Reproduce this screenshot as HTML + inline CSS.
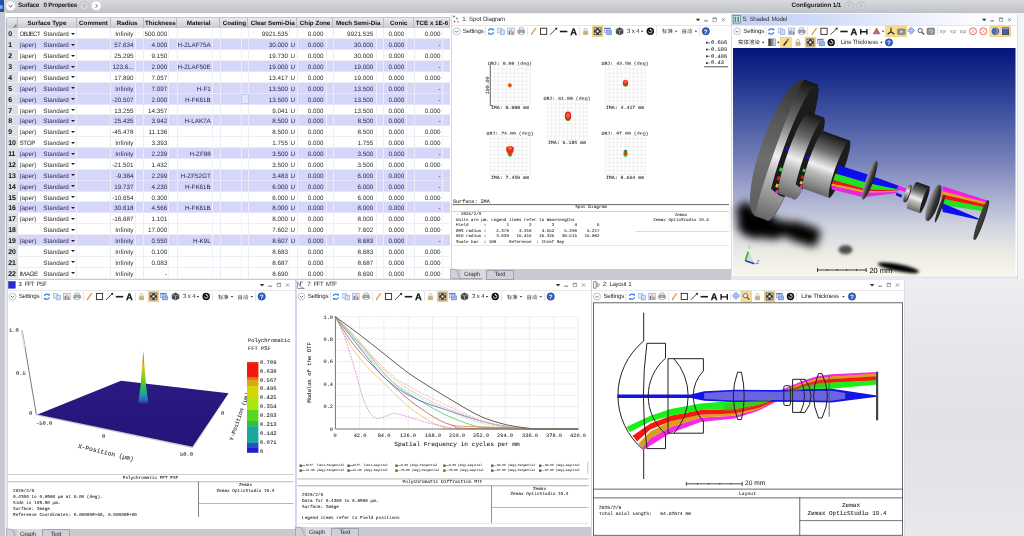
<!DOCTYPE html>
<html lang="en"><head><meta charset="utf-8"><title>Zemax OpticStudio</title>
<style>
*{box-sizing:border-box;margin:0;padding:0}
html,body{width:1024px;height:536px;overflow:hidden}
body{text-rendering:geometricPrecision;background:#e6e8eb;font-family:"Liberation Sans","Noto Sans CJK SC",sans-serif;font-size:6.3px;color:#2c2c2c;position:relative}
#app{position:absolute;left:0;top:0;width:1024px;height:536px;overflow:hidden;filter:blur(.4px);will-change:transform;isolation:isolate}
.a{position:absolute}
.t{position:absolute;white-space:nowrap;line-height:1}
.m{position:absolute;white-space:pre;line-height:1;font-family:"Liberation Mono","DejaVu Sans Mono",monospace;color:#262626;-webkit-text-stroke:.2px #262626}
.win{position:absolute;background:#fff;overflow:hidden}
.ttl{position:absolute;left:0;top:0;right:0;height:10.5px;background:#fff}
.tbar{position:absolute;left:0;right:0;height:12px;background:#fdfdfd}
.sep{position:absolute;width:1px;height:9px;background:#d9dbe0}
.hl{position:absolute;background:#fbe3a0;border:0.5px solid #e8c35c;height:10.5px}
.tabs{position:absolute;left:0;right:0;background:#c9cbd1}
.tab{position:absolute;font-size:7px;text-align:center;line-height:9px;color:#333}
svg{position:absolute;overflow:visible}
.hd{position:absolute;top:17.5px;height:11px;font-weight:bold;font-size:6.25px;text-align:center;line-height:12px;color:#111;white-space:nowrap;background:linear-gradient(#e9eaee,#c6c9cf);border-right:1px solid #b9bcc3;overflow:hidden;padding-left:1px}
.row{position:absolute;left:17.5px;width:432.5px;height:10.875px;background:#fff;border-bottom:1px solid #eeeef2}
.row.g{background:#d6d6fb;border-bottom:1px solid #e4e4fb;color:#2a2a50}
.c{position:absolute;top:0;height:10.875px;overflow:hidden;line-height:14.9px;font-size:6.3px;white-space:nowrap}
.r{text-align:right}
.v{position:absolute;top:28.4px;width:1px;height:250px;background:rgba(225,226,234,.9)}
.rn{position:absolute;left:6.5px;width:11px;height:10.875px;overflow:hidden;font-weight:bold;font-size:6.9px;line-height:14.7px;text-align:left;padding-left:1.8px;letter-spacing:-.2px;color:#111;background:#dddfe4;border-bottom:1px solid #eceef1}
</style></head>
<body>
<div id="app">
<div class="a" style="left:0;top:0;width:1024px;height:12.5px;background:linear-gradient(#d8dade 0%,#cdcfd4 45%,#bfc1c7 100%)"></div>
<div class="a" style="left:0;top:12.5px;width:1024px;height:1.5px;background:#f4f5f7"></div>
<div class="a" style="left:0;top:0;width:4px;height:12.3px;background:#2450a8"></div><div class="a" style="left:-1.5px;top:4.5px;width:4px;height:4px;border-radius:2px;background:#7fa6e8"></div>
<div class="a" style="left:0;top:12px;width:4.8px;height:524px;background:#c7cad3"></div><div class="a" style="left:4.8px;top:12px;width:1.7px;height:524px;background:#f2f3f6"></div>
<div class="a" style="left:5.5px;top:13px;width:445px;height:266.5px;background:#fff"></div>
<div class="a" style="left:6px;top:17px;width:444px;height:262px;border-left:.7px solid #b4b7c0;border-top:.7px solid #c4c7cf;border-top-left-radius:2px"></div>
<svg class="a" style="left:0;top:0" width="110" height="12" viewBox="0 0 110 12"><circle cx="10.6" cy="5.9" r="4.7" fill="#fff" stroke="#d8d8dc" stroke-width=".5"/><path d="M8.7 5.2 L10.6 7 L12.5 5.2" fill="none" stroke="#444" stroke-width="1"/><circle cx="84.4" cy="5.9" r="4.7" fill="#d2d4d9" stroke="#b8bac0" stroke-width=".6"/><path d="M85.2 4 L83.4 5.9 L85.2 7.8" fill="none" stroke="#aaa" stroke-width=".9"/><circle cx="96.3" cy="5.9" r="4.7" fill="#fff" stroke="#d8d8dc" stroke-width=".5"/><path d="M95.6 4 L97.4 5.9 L95.6 7.8" fill="none" stroke="#555" stroke-width=".9"/></svg>
<div class="t" style="left:18px;top:2.6px;font-weight:bold;font-size:6.3px;letter-spacing:-.3px;color:#222">Surface</div>
<div class="t" style="left:43.6px;top:2.6px;font-weight:bold;font-size:6.3px;letter-spacing:-.25px;color:#222">0 Properties</div>
<div class="t" style="left:791.5px;top:2.5px;font-weight:bold;font-size:6.3px;letter-spacing:-.12px;color:#222">Configuration 1/1</div>
<svg class="a" style="left:840px;top:0" width="30" height="12" viewBox="840 0 30 12"><circle cx="849" cy="5.7" r="4.3" fill="#d0d2d7" stroke="#b4b6bc" stroke-width=".6"/><path d="M849.8 3.9 L848 5.7 L849.8 7.5" fill="none" stroke="#aaa" stroke-width=".9"/><circle cx="861" cy="5.7" r="4.3" fill="#d0d2d7" stroke="#b4b6bc" stroke-width=".6"/><path d="M860.2 3.9 L862 5.7 L860.2 7.5" fill="none" stroke="#aaa" stroke-width=".9"/></svg>
<div class="a" style="left:6.5px;top:17.5px;width:443.5px;height:11px;background:linear-gradient(#e9eaee,#c6c9cf)"></div>
<div class="hd" style="left:6.5px;width:11.0px"></div>
<div class="hd" style="left:17.5px;width:59.0px">Surface Type</div>
<div class="hd" style="left:76.5px;width:34.0px">Comment</div>
<div class="hd" style="left:110.5px;width:33.2px">Radius</div>
<div class="hd" style="left:143.7px;width:33.3px">Thickness</div>
<div class="hd" style="left:177.0px;width:43.3px">Material</div>
<div class="hd" style="left:220.3px;width:28.1px">Coating</div>
<div class="hd" style="left:248.4px;width:48.8px">Clear Semi-Dia</div>
<div class="hd" style="left:297.2px;width:35.8px">Chip Zone</div>
<div class="hd" style="left:333.0px;width:50.5px">Mech Semi-Dia</div>
<div class="hd" style="left:383.5px;width:30.5px">Conic</div>
<div class="hd" style="left:414.0px;width:36.0px">TCE x 1E-6</div>
<svg class="a" style="left:12px;top:23px" width="5" height="5" viewBox="0 0 5 5"><path d="M4.5 0.5 L4.5 4.5 L0.5 4.5 Z" fill="#8a8d94"/></svg>
<div class="rn" style="top:28.400px">0</div>
<div class="row" style="top:28.400px"><span class="c" style="left:2px;letter-spacing:-.72px">OBJECT</span><span class="c" style="left:25.8px">Standard</span><i style="position:absolute;left:53.1px;top:4.5px;width:0;height:0;border-left:2.1px solid transparent;border-right:2.1px solid transparent;border-top:2.6px solid #1a1a1a"></i><span class="c r" style="left:76.0px;width:40px">Infinity</span><span class="c r" style="left:109.8px;width:40px">500.000</span><span class="c r" style="left:230.5px;width:40px">9921.535</span><span class="c r" style="left:266.0px;width:40px">0.000</span><span class="c r" style="left:315.7px;width:40px">9921.535</span><span class="c r" style="left:346.7px;width:40px">0.000</span><span class="c r" style="left:383.0px;width:40px">0.000</span></div>
<div class="rn" style="top:39.275px">1</div>
<div class="row g" style="top:39.275px"><span class="c" style="left:2.0px">(aper)</span><span class="c" style="left:25.8px">Standard</span><i style="position:absolute;left:53.1px;top:4.5px;width:0;height:0;border-left:2.1px solid transparent;border-right:2.1px solid transparent;border-top:2.6px solid #1a1a1a"></i><span class="c r" style="left:76.0px;width:40px">57.634</span><span class="c r" style="left:109.8px;width:40px">4.000</span><span class="c r" style="left:153.3px;width:40px">H-ZLAF75A</span><span class="c r" style="left:230.5px;width:40px">30.000</span><span class="c" style="left:273.1px">U</span><span class="c r" style="left:266.0px;width:40px">0.000</span><span class="c r" style="left:315.7px;width:40px">30.000</span><span class="c r" style="left:346.7px;width:40px">0.000</span><span class="c r" style="left:383.0px;width:40px">-</span></div>
<div class="rn" style="top:50.150px">2</div>
<div class="row" style="top:50.150px"><span class="c" style="left:2.0px">(aper)</span><span class="c" style="left:25.8px">Standard</span><i style="position:absolute;left:53.1px;top:4.5px;width:0;height:0;border-left:2.1px solid transparent;border-right:2.1px solid transparent;border-top:2.6px solid #1a1a1a"></i><span class="c r" style="left:76.0px;width:40px">25.295</span><span class="c r" style="left:109.8px;width:40px">9.150</span><span class="c r" style="left:230.5px;width:40px">19.730</span><span class="c" style="left:273.1px">U</span><span class="c r" style="left:266.0px;width:40px">0.000</span><span class="c r" style="left:315.7px;width:40px">30.000</span><span class="c r" style="left:346.7px;width:40px">0.000</span><span class="c r" style="left:383.0px;width:40px">0.000</span></div>
<div class="rn" style="top:61.025px">3</div>
<div class="row g" style="top:61.025px"><span class="c" style="left:2.0px">(aper)</span><span class="c" style="left:25.8px">Standard</span><i style="position:absolute;left:53.1px;top:4.5px;width:0;height:0;border-left:2.1px solid transparent;border-right:2.1px solid transparent;border-top:2.6px solid #1a1a1a"></i><span class="c r" style="left:76.0px;width:40px">123.6...</span><span class="c r" style="left:109.8px;width:40px">2.000</span><span class="c r" style="left:153.3px;width:40px">H-ZLAF50E</span><span class="c r" style="left:230.5px;width:40px">19.000</span><span class="c" style="left:273.1px">U</span><span class="c r" style="left:266.0px;width:40px">0.000</span><span class="c r" style="left:315.7px;width:40px">19.000</span><span class="c r" style="left:346.7px;width:40px">0.000</span><span class="c r" style="left:383.0px;width:40px">-</span></div>
<div class="rn" style="top:71.900px">4</div>
<div class="row" style="top:71.900px"><span class="c" style="left:2.0px">(aper)</span><span class="c" style="left:25.8px">Standard</span><i style="position:absolute;left:53.1px;top:4.5px;width:0;height:0;border-left:2.1px solid transparent;border-right:2.1px solid transparent;border-top:2.6px solid #1a1a1a"></i><span class="c r" style="left:76.0px;width:40px">17.890</span><span class="c r" style="left:109.8px;width:40px">7.057</span><span class="c r" style="left:230.5px;width:40px">13.417</span><span class="c" style="left:273.1px">U</span><span class="c r" style="left:266.0px;width:40px">0.000</span><span class="c r" style="left:315.7px;width:40px">19.000</span><span class="c r" style="left:346.7px;width:40px">0.000</span><span class="c r" style="left:383.0px;width:40px">0.000</span></div>
<div class="rn" style="top:82.775px">5</div>
<div class="row g" style="top:82.775px"><span class="c" style="left:2.0px">(aper)</span><span class="c" style="left:25.8px">Standard</span><i style="position:absolute;left:53.1px;top:4.5px;width:0;height:0;border-left:2.1px solid transparent;border-right:2.1px solid transparent;border-top:2.6px solid #1a1a1a"></i><span class="c r" style="left:76.0px;width:40px">Infinity</span><span class="c r" style="left:109.8px;width:40px">7.097</span><span class="c r" style="left:153.3px;width:40px">H-F1</span><span class="c r" style="left:230.5px;width:40px">13.500</span><span class="c" style="left:273.1px">U</span><span class="c r" style="left:266.0px;width:40px">0.000</span><span class="c r" style="left:315.7px;width:40px">13.500</span><span class="c r" style="left:346.7px;width:40px">0.000</span><span class="c r" style="left:383.0px;width:40px">-</span></div>
<div class="rn" style="top:93.650px">6</div>
<div class="row g" style="top:93.650px"><span class="c" style="left:2.0px">(aper)</span><span class="c" style="left:25.8px">Standard</span><i style="position:absolute;left:53.1px;top:4.5px;width:0;height:0;border-left:2.1px solid transparent;border-right:2.1px solid transparent;border-top:2.6px solid #1a1a1a"></i><span class="c r" style="left:76.0px;width:40px">-20.507</span><span class="c r" style="left:109.8px;width:40px">2.000</span><span class="c r" style="left:153.3px;width:40px">H-FK61B</span><span class="c r" style="left:230.5px;width:40px">13.500</span><span class="c" style="left:273.1px">U</span><span class="c r" style="left:266.0px;width:40px">0.000</span><span class="c r" style="left:315.7px;width:40px">13.500</span><span class="c r" style="left:346.7px;width:40px">0.000</span><span class="c r" style="left:383.0px;width:40px">-</span></div>
<div class="rn" style="top:104.525px">7</div>
<div class="row" style="top:104.525px"><span class="c" style="left:2.0px">(aper)</span><span class="c" style="left:25.8px">Standard</span><i style="position:absolute;left:53.1px;top:4.5px;width:0;height:0;border-left:2.1px solid transparent;border-right:2.1px solid transparent;border-top:2.6px solid #1a1a1a"></i><span class="c r" style="left:76.0px;width:40px">13.255</span><span class="c r" style="left:109.8px;width:40px">14.357</span><span class="c r" style="left:230.5px;width:40px">9.041</span><span class="c" style="left:273.1px">U</span><span class="c r" style="left:266.0px;width:40px">0.000</span><span class="c r" style="left:315.7px;width:40px">13.500</span><span class="c r" style="left:346.7px;width:40px">0.000</span><span class="c r" style="left:383.0px;width:40px">0.000</span></div>
<div class="rn" style="top:115.400px">8</div>
<div class="row g" style="top:115.400px"><span class="c" style="left:2.0px">(aper)</span><span class="c" style="left:25.8px">Standard</span><i style="position:absolute;left:53.1px;top:4.5px;width:0;height:0;border-left:2.1px solid transparent;border-right:2.1px solid transparent;border-top:2.6px solid #1a1a1a"></i><span class="c r" style="left:76.0px;width:40px">25.435</span><span class="c r" style="left:109.8px;width:40px">3.942</span><span class="c r" style="left:153.3px;width:40px">H-LAK7A</span><span class="c r" style="left:230.5px;width:40px">8.500</span><span class="c" style="left:273.1px">U</span><span class="c r" style="left:266.0px;width:40px">0.000</span><span class="c r" style="left:315.7px;width:40px">8.500</span><span class="c r" style="left:346.7px;width:40px">0.000</span><span class="c r" style="left:383.0px;width:40px">-</span></div>
<div class="rn" style="top:126.275px">9</div>
<div class="row" style="top:126.275px"><span class="c" style="left:2.0px">(aper)</span><span class="c" style="left:25.8px">Standard</span><i style="position:absolute;left:53.1px;top:4.5px;width:0;height:0;border-left:2.1px solid transparent;border-right:2.1px solid transparent;border-top:2.6px solid #1a1a1a"></i><span class="c r" style="left:76.0px;width:40px">-45.478</span><span class="c r" style="left:109.8px;width:40px">11.136</span><span class="c r" style="left:230.5px;width:40px">8.500</span><span class="c" style="left:273.1px">U</span><span class="c r" style="left:266.0px;width:40px">0.000</span><span class="c r" style="left:315.7px;width:40px">8.500</span><span class="c r" style="left:346.7px;width:40px">0.000</span><span class="c r" style="left:383.0px;width:40px">0.000</span></div>
<div class="rn" style="top:137.150px">10</div>
<div class="row" style="top:137.150px"><span class="c" style="left:2px;letter-spacing:-.4px">STOP</span><span class="c" style="left:25.8px">Standard</span><i style="position:absolute;left:53.1px;top:4.5px;width:0;height:0;border-left:2.1px solid transparent;border-right:2.1px solid transparent;border-top:2.6px solid #1a1a1a"></i><span class="c r" style="left:76.0px;width:40px">Infinity</span><span class="c r" style="left:109.8px;width:40px">3.393</span><span class="c r" style="left:230.5px;width:40px">1.755</span><span class="c" style="left:273.1px">U</span><span class="c r" style="left:266.0px;width:40px">0.000</span><span class="c r" style="left:315.7px;width:40px">1.755</span><span class="c r" style="left:346.7px;width:40px">0.000</span><span class="c r" style="left:383.0px;width:40px">0.000</span></div>
<div class="rn" style="top:148.025px">11</div>
<div class="row g" style="top:148.025px"><span class="c" style="left:2.0px">(aper)</span><span class="c" style="left:25.8px">Standard</span><i style="position:absolute;left:53.1px;top:4.5px;width:0;height:0;border-left:2.1px solid transparent;border-right:2.1px solid transparent;border-top:2.6px solid #1a1a1a"></i><span class="c r" style="left:76.0px;width:40px">Infinity</span><span class="c r" style="left:109.8px;width:40px">2.239</span><span class="c r" style="left:153.3px;width:40px">H-ZF88</span><span class="c r" style="left:230.5px;width:40px">3.500</span><span class="c" style="left:273.1px">U</span><span class="c r" style="left:266.0px;width:40px">0.000</span><span class="c r" style="left:315.7px;width:40px">3.500</span><span class="c r" style="left:346.7px;width:40px">0.000</span><span class="c r" style="left:383.0px;width:40px">-</span></div>
<div class="rn" style="top:158.900px">12</div>
<div class="row" style="top:158.900px"><span class="c" style="left:2.0px">(aper)</span><span class="c" style="left:25.8px">Standard</span><i style="position:absolute;left:53.1px;top:4.5px;width:0;height:0;border-left:2.1px solid transparent;border-right:2.1px solid transparent;border-top:2.6px solid #1a1a1a"></i><span class="c r" style="left:76.0px;width:40px">-21.501</span><span class="c r" style="left:109.8px;width:40px">1.432</span><span class="c r" style="left:230.5px;width:40px">3.500</span><span class="c" style="left:273.1px">U</span><span class="c r" style="left:266.0px;width:40px">0.000</span><span class="c r" style="left:315.7px;width:40px">3.500</span><span class="c r" style="left:346.7px;width:40px">0.000</span><span class="c r" style="left:383.0px;width:40px">0.000</span></div>
<div class="rn" style="top:169.775px">13</div>
<div class="row g" style="top:169.775px"><span class="c" style="left:2.0px">(aper)</span><span class="c" style="left:25.8px">Standard</span><i style="position:absolute;left:53.1px;top:4.5px;width:0;height:0;border-left:2.1px solid transparent;border-right:2.1px solid transparent;border-top:2.6px solid #1a1a1a"></i><span class="c r" style="left:76.0px;width:40px">-9.384</span><span class="c r" style="left:109.8px;width:40px">2.299</span><span class="c r" style="left:153.3px;width:40px">H-ZF52GT</span><span class="c r" style="left:230.5px;width:40px">3.483</span><span class="c" style="left:273.1px">U</span><span class="c r" style="left:266.0px;width:40px">0.000</span><span class="c r" style="left:315.7px;width:40px">6.000</span><span class="c r" style="left:346.7px;width:40px">0.000</span><span class="c r" style="left:383.0px;width:40px">-</span></div>
<div class="rn" style="top:180.650px">14</div>
<div class="row g" style="top:180.650px"><span class="c" style="left:2.0px">(aper)</span><span class="c" style="left:25.8px">Standard</span><i style="position:absolute;left:53.1px;top:4.5px;width:0;height:0;border-left:2.1px solid transparent;border-right:2.1px solid transparent;border-top:2.6px solid #1a1a1a"></i><span class="c r" style="left:76.0px;width:40px">19.737</span><span class="c r" style="left:109.8px;width:40px">4.230</span><span class="c r" style="left:153.3px;width:40px">H-FK61B</span><span class="c r" style="left:230.5px;width:40px">6.000</span><span class="c" style="left:273.1px">U</span><span class="c r" style="left:266.0px;width:40px">0.000</span><span class="c r" style="left:315.7px;width:40px">6.000</span><span class="c r" style="left:346.7px;width:40px">0.000</span><span class="c r" style="left:383.0px;width:40px">-</span></div>
<div class="rn" style="top:191.525px">15</div>
<div class="row" style="top:191.525px"><span class="c" style="left:2.0px">(aper)</span><span class="c" style="left:25.8px">Standard</span><i style="position:absolute;left:53.1px;top:4.5px;width:0;height:0;border-left:2.1px solid transparent;border-right:2.1px solid transparent;border-top:2.6px solid #1a1a1a"></i><span class="c r" style="left:76.0px;width:40px">-10.654</span><span class="c r" style="left:109.8px;width:40px">0.300</span><span class="c r" style="left:230.5px;width:40px">6.000</span><span class="c" style="left:273.1px">U</span><span class="c r" style="left:266.0px;width:40px">0.000</span><span class="c r" style="left:315.7px;width:40px">6.000</span><span class="c r" style="left:346.7px;width:40px">0.000</span><span class="c r" style="left:383.0px;width:40px">0.000</span></div>
<div class="rn" style="top:202.400px">16</div>
<div class="row g" style="top:202.400px"><span class="c" style="left:2.0px">(aper)</span><span class="c" style="left:25.8px">Standard</span><i style="position:absolute;left:53.1px;top:4.5px;width:0;height:0;border-left:2.1px solid transparent;border-right:2.1px solid transparent;border-top:2.6px solid #1a1a1a"></i><span class="c r" style="left:76.0px;width:40px">30.618</span><span class="c r" style="left:109.8px;width:40px">4.566</span><span class="c r" style="left:153.3px;width:40px">H-FK61B</span><span class="c r" style="left:230.5px;width:40px">8.000</span><span class="c" style="left:273.1px">U</span><span class="c r" style="left:266.0px;width:40px">0.000</span><span class="c r" style="left:315.7px;width:40px">8.000</span><span class="c r" style="left:346.7px;width:40px">0.000</span><span class="c r" style="left:383.0px;width:40px">-</span></div>
<div class="rn" style="top:213.275px">17</div>
<div class="row" style="top:213.275px"><span class="c" style="left:2.0px">(aper)</span><span class="c" style="left:25.8px">Standard</span><i style="position:absolute;left:53.1px;top:4.5px;width:0;height:0;border-left:2.1px solid transparent;border-right:2.1px solid transparent;border-top:2.6px solid #1a1a1a"></i><span class="c r" style="left:76.0px;width:40px">-16.687</span><span class="c r" style="left:109.8px;width:40px">1.101</span><span class="c r" style="left:230.5px;width:40px">8.000</span><span class="c" style="left:273.1px">U</span><span class="c r" style="left:266.0px;width:40px">0.000</span><span class="c r" style="left:315.7px;width:40px">8.000</span><span class="c r" style="left:346.7px;width:40px">0.000</span><span class="c r" style="left:383.0px;width:40px">0.000</span></div>
<div class="rn" style="top:224.150px">18</div>
<div class="row" style="top:224.150px"><span class="c" style="left:25.8px">Standard</span><i style="position:absolute;left:53.1px;top:4.5px;width:0;height:0;border-left:2.1px solid transparent;border-right:2.1px solid transparent;border-top:2.6px solid #1a1a1a"></i><span class="c r" style="left:76.0px;width:40px">Infinity</span><span class="c r" style="left:109.8px;width:40px">17.000</span><span class="c r" style="left:230.5px;width:40px">7.602</span><span class="c" style="left:273.1px">U</span><span class="c r" style="left:266.0px;width:40px">0.000</span><span class="c r" style="left:315.7px;width:40px">7.602</span><span class="c r" style="left:346.7px;width:40px">0.000</span><span class="c r" style="left:383.0px;width:40px">0.000</span></div>
<div class="rn" style="top:235.025px">19</div>
<div class="row g" style="top:235.025px"><span class="c" style="left:2.0px">(aper)</span><span class="c" style="left:25.8px">Standard</span><i style="position:absolute;left:53.1px;top:4.5px;width:0;height:0;border-left:2.1px solid transparent;border-right:2.1px solid transparent;border-top:2.6px solid #1a1a1a"></i><span class="c r" style="left:76.0px;width:40px">Infinity</span><span class="c r" style="left:109.8px;width:40px">0.550</span><span class="c r" style="left:153.3px;width:40px">H-K9L</span><span class="c r" style="left:230.5px;width:40px">8.607</span><span class="c" style="left:273.1px">U</span><span class="c r" style="left:266.0px;width:40px">0.000</span><span class="c r" style="left:315.7px;width:40px">8.683</span><span class="c r" style="left:346.7px;width:40px">0.000</span><span class="c r" style="left:383.0px;width:40px">-</span></div>
<div class="rn" style="top:245.900px">20</div>
<div class="row" style="top:245.900px"><span class="c" style="left:25.8px">Standard</span><i style="position:absolute;left:53.1px;top:4.5px;width:0;height:0;border-left:2.1px solid transparent;border-right:2.1px solid transparent;border-top:2.6px solid #1a1a1a"></i><span class="c r" style="left:76.0px;width:40px">Infinity</span><span class="c r" style="left:109.8px;width:40px">0.100</span><span class="c r" style="left:230.5px;width:40px">8.683</span><span class="c r" style="left:266.0px;width:40px">0.000</span><span class="c r" style="left:315.7px;width:40px">8.683</span><span class="c r" style="left:346.7px;width:40px">0.000</span><span class="c r" style="left:383.0px;width:40px">0.000</span></div>
<div class="rn" style="top:256.775px">21</div>
<div class="row" style="top:256.775px"><span class="c" style="left:25.8px">Standard</span><i style="position:absolute;left:53.1px;top:4.5px;width:0;height:0;border-left:2.1px solid transparent;border-right:2.1px solid transparent;border-top:2.6px solid #1a1a1a"></i><span class="c r" style="left:76.0px;width:40px">Infinity</span><span class="c r" style="left:109.8px;width:40px">0.083</span><span class="c r" style="left:230.5px;width:40px">8.687</span><span class="c r" style="left:266.0px;width:40px">0.000</span><span class="c r" style="left:315.7px;width:40px">8.687</span><span class="c r" style="left:346.7px;width:40px">0.000</span><span class="c r" style="left:383.0px;width:40px">0.000</span></div>
<div class="rn" style="top:267.650px">22</div>
<div class="row" style="top:267.650px"><span class="c" style="left:2px;letter-spacing:-.4px">IMAGE</span><span class="c" style="left:25.8px">Standard</span><i style="position:absolute;left:53.1px;top:4.5px;width:0;height:0;border-left:2.1px solid transparent;border-right:2.1px solid transparent;border-top:2.6px solid #1a1a1a"></i><span class="c r" style="left:76.0px;width:40px">Infinity</span><span class="c r" style="left:109.8px;width:40px">-</span><span class="c r" style="left:230.5px;width:40px">8.690</span><span class="c r" style="left:266.0px;width:40px">0.000</span><span class="c r" style="left:315.7px;width:40px">8.690</span><span class="c r" style="left:346.7px;width:40px">0.000</span><span class="c r" style="left:383.0px;width:40px">0.000</span></div>
<div class="v" style="left:76.0px;background:rgba(236,237,244,.95)"></div>
<div class="v" style="left:110.0px;background:rgba(236,237,244,.95)"></div>
<div class="v" style="left:143.2px;background:rgba(236,237,244,.95)"></div>
<div class="v" style="left:176.5px;background:rgba(236,237,244,.95)"></div>
<div class="v" style="left:219.8px;background:rgba(236,237,244,.95)"></div>
<div class="v" style="left:247.9px;background:rgba(236,237,244,.95)"></div>
<div class="v" style="left:296.7px;background:rgba(236,237,244,.95)"></div>
<div class="v" style="left:332.5px;background:rgba(236,237,244,.95)"></div>
<div class="v" style="left:383.0px;background:rgba(236,237,244,.95)"></div>
<div class="v" style="left:413.5px;background:rgba(236,237,244,.95)"></div>
<div class="v" style="left:134.5px;background:rgba(240,241,247,.9)"></div>
<div class="v" style="left:168.0px;background:rgba(240,241,247,.9)"></div>
<div class="v" style="left:211.7px;background:rgba(240,241,247,.9)"></div>
<div class="v" style="left:240.6px;background:rgba(240,241,247,.9)"></div>
<div class="v" style="left:289.2px;background:rgba(240,241,247,.9)"></div>
<div class="v" style="left:325.5px;background:rgba(240,241,247,.9)"></div>
<div class="v" style="left:375.5px;background:rgba(240,241,247,.9)"></div>
<div class="v" style="left:406.0px;background:rgba(240,241,247,.9)"></div>
<div class="v" style="left:442.0px;background:rgba(240,241,247,.9)"></div>
<div class="a" style="left:241px;top:93.7px;width:7.5px;height:10.5px;background:#dfe6f8;border:.5px solid #c4cdea"></div>
<div class="a" style="left:450.5px;top:14.0px;width:280.0px;height:265.5px;background:#fff;border-left:1px solid #d3d8ea"></div>
<div class="a" style="left:450.5px;top:24.5px;width:280.0px;height:.8px;background:#e4e6ec"></div>
<div class="t" style="left:462.2px;top:16.6px;font-size:6.2px;color:#333;letter-spacing:-0.19px;word-spacing:0.48px;">1: Spot Diagram</div>
<div class="t" style="left:462.8px;top:28.6px;font-size:6.2px;color:#2c2c2c;letter-spacing:-.2px;">Settings</div>
<div class="t" style="left:627.0px;top:28.6px;font-size:6.0px;color:#2c2c2c;letter-spacing:-.1px;">3 x 4</div>
<div class="t" style="left:662.0px;top:30.4px;font-size:5.4px;color:#2c2c2c;">标准</div>
<div class="t" style="left:681.6px;top:30.4px;font-size:5.4px;color:#2c2c2c;">自动</div>
<div class="m" style="left:711.30px;top:40.00px;font-size:16.20px;color:#262626;transform:scale(0.33333);transform-origin:0 0">0.656</div>
<div class="m" style="left:711.30px;top:46.80px;font-size:16.20px;color:#262626;transform:scale(0.33333);transform-origin:0 0">0.589</div>
<div class="m" style="left:711.30px;top:53.60px;font-size:16.20px;color:#262626;transform:scale(0.33333);transform-origin:0 0">0.486</div>
<div class="m" style="left:711.30px;top:60.40px;font-size:16.20px;color:#262626;transform:scale(0.33333);transform-origin:0 0">0.43</div>
<div class="m" style="left:480.30px;top:62.40px;width:180.0px;text-align:center;font-size:14.70px;transform:scale(0.33333);transform-origin:0 0">OBJ: 0.00 (deg)</div>
<div class="m" style="left:480.30px;top:106.20px;width:180.0px;text-align:center;font-size:14.70px;transform:scale(0.33333);transform-origin:0 0">IMA: 0.000 mm</div>
<div class="m" style="left:595.30px;top:62.40px;width:180.0px;text-align:center;font-size:14.70px;transform:scale(0.33333);transform-origin:0 0">OBJ: 43.50 (deg)</div>
<div class="m" style="left:595.30px;top:106.20px;width:180.0px;text-align:center;font-size:14.70px;transform:scale(0.33333);transform-origin:0 0">IMA: 4.417 mm</div>
<div class="m" style="left:537.30px;top:97.40px;width:180.0px;text-align:center;font-size:14.70px;transform:scale(0.33333);transform-origin:0 0">OBJ: 61.00 (deg)</div>
<div class="m" style="left:537.30px;top:141.20px;width:180.0px;text-align:center;font-size:14.70px;transform:scale(0.33333);transform-origin:0 0">IMA: 6.185 mm</div>
<div class="m" style="left:480.30px;top:131.90px;width:180.0px;text-align:center;font-size:14.70px;transform:scale(0.33333);transform-origin:0 0">OBJ: 74.00 (deg)</div>
<div class="m" style="left:480.30px;top:175.70px;width:180.0px;text-align:center;font-size:14.70px;transform:scale(0.33333);transform-origin:0 0">IMA: 7.459 mm</div>
<div class="m" style="left:595.30px;top:131.90px;width:180.0px;text-align:center;font-size:14.70px;transform:scale(0.33333);transform-origin:0 0">OBJ: 87.00 (deg)</div>
<div class="m" style="left:595.30px;top:175.70px;width:180.0px;text-align:center;font-size:14.70px;transform:scale(0.33333);transform-origin:0 0">IMA: 8.664 mm</div>
<div class="m" style="left:442.50px;top:77.70px;width:90.0px;text-align:center;font-size:14.70px;transform:rotate(-90deg) scale(0.33333);color:#333">100.00</div>
<div class="m" style="left:453.00px;top:198.90px;font-size:15.30px;color:#262626;transform:scale(0.33333);transform-origin:0 0">Surface: IMA</div>
<div class="m" style="left:452.00px;top:205.20px;width:834.0px;text-align:center;font-size:13.20px;transform:scale(0.33333);transform-origin:0 0">Spot Diagram</div>
<div class="m" style="left:456.30px;top:212.40px;font-size:12.60px;color:#262626;transform:scale(0.33333);transform-origin:0 0">. 2026/2/9</div>
<div class="m" style="left:456.30px;top:217.90px;font-size:12.60px;color:#262626;transform:scale(0.33333);transform-origin:0 0">Units are µm. Legend items refer to Wavelengths</div>
<div class="m" style="left:456.30px;top:223.40px;font-size:12.60px;color:#262626;transform:scale(0.33333);transform-origin:0 0">Field      :        1        2        3        4        5</div>
<div class="m" style="left:456.30px;top:228.90px;font-size:12.60px;color:#262626;transform:scale(0.33333);transform-origin:0 0">RMS radius :    2.370    3.318    4.552    5.290    5.217</div>
<div class="m" style="left:456.30px;top:234.40px;font-size:12.60px;color:#262626;transform:scale(0.33333);transform-origin:0 0">GEO radius :    3.830   16.416   26.325   30.515   15.002</div>
<div class="m" style="left:456.30px;top:239.90px;font-size:12.60px;color:#262626;transform:scale(0.33333);transform-origin:0 0">Scale bar  : 100     Reference  : Chief Ray</div>
<div class="m" style="left:634.00px;top:212.60px;width:282.0px;text-align:center;font-size:12.60px;transform:scale(0.33333);transform-origin:0 0">Zemax</div>
<div class="m" style="left:634.00px;top:218.00px;width:282.0px;text-align:center;font-size:12.60px;transform:scale(0.33333);transform-origin:0 0">Zemax OpticStudio 19.4</div>
<div class="a" style="left:450.5px;top:269.0px;width:280.0px;height:10.5px;background:#c8cad0"></div>
<div class="a" style="left:460.5px;top:269.0px;width:27px;height:10.5px;background:#d9dadf"></div>
<div class="t" style="left:464.0px;top:271.8px;font-size:6.2px;color:#333;letter-spacing:-.3px;">Graph</div>
<div class="a" style="left:486.1px;top:269.6px;width:28.4px;height:10.5px;background:#cdd0d8;border:.7px solid #9fa2ae"></div>
<div class="t" style="left:494.8px;top:271.8px;font-size:6.2px;color:#333;letter-spacing:-.3px;">Text</div>
<div class="a" style="left:731.0px;top:14.0px;width:286.0px;height:264.0px;background:#fff;border-left:1px solid #d3d8ea"></div>
<div class="a" style="left:731.0px;top:14.0px;width:286.0px;height:10.5px;background:linear-gradient(90deg,#c3d0f3 0%,#cfdaf7 30%,#e9eefc 60%,#fbfcff 85%)"></div>
<div class="a" style="left:731.0px;top:24.5px;width:286.0px;height:.8px;background:#e4e6ec"></div>
<div class="t" style="left:742.7px;top:16.6px;font-size:6.2px;color:#333;letter-spacing:-0.25px;word-spacing:0.64px;">5: Shaded Model</div>
<div class="a" style="left:1017px;top:13.5px;width:7px;height:265px;background:#f3f4f6;border-left:.7px solid #d9dce4"></div>
<div class="t" style="left:743.3px;top:28.6px;font-size:6.2px;color:#2c2c2c;letter-spacing:-.2px;">Settings</div>
<div class="t" style="left:938.0px;top:29.5px;width:10px;text-align:center;font-size:4.2px;color:#555">X|Y</div>
<div class="t" style="left:948.0px;top:29.5px;width:10px;text-align:center;font-size:4.2px;color:#555">Y|Z</div>
<div class="t" style="left:958.0px;top:29.5px;width:10px;text-align:center;font-size:4.2px;color:#555">X|Z</div>
<div class="t" style="left:738.0px;top:41.2px;font-size:5.5px;color:#2c2c2c;">实体渲染</div>
<div class="t" style="left:840.8px;top:39.7px;font-size:6.2px;color:#2c2c2c;letter-spacing:-.3px;">Line Thickness</div>
<svg class="a" style="left:732.5px;top:47.7px" width="282.5" height="227.6" viewBox="732.5 47.7 282.5 227.6"><defs>
<linearGradient id="bg3" x1="0" y1="0" x2="0" y2="1">
<stop offset="0" stop-color="#02157c"/><stop offset=".12" stop-color="#192e8b"/><stop offset=".3" stop-color="#4356a2"/><stop offset=".5" stop-color="#7782ba"/>
<stop offset=".65" stop-color="#a7add0"/><stop offset=".78" stop-color="#d1d3df"/><stop offset=".9" stop-color="#ebebe5"/><stop offset="1" stop-color="#f8f6e8"/></linearGradient>
<linearGradient id="cy" x1="0" y1="0" x2="1" y2="0">
<stop offset="0" stop-color="#707070"/><stop offset=".25" stop-color="#e4e4e4"/><stop offset=".45" stop-color="#b0b0b0"/><stop offset=".8" stop-color="#5a5a5a"/><stop offset="1" stop-color="#2c2c2c"/></linearGradient>
<linearGradient id="cyv" x1="0" y1="0" x2="0" y2="1">
<stop offset="0" stop-color="#000" stop-opacity=".75"/><stop offset=".14" stop-color="#000" stop-opacity=".15"/><stop offset=".5" stop-color="#000" stop-opacity="0"/><stop offset=".85" stop-color="#000" stop-opacity=".3"/><stop offset="1" stop-color="#000" stop-opacity=".7"/></linearGradient>
<linearGradient id="dome" x1="0" y1="0" x2="1" y2="0">
<stop offset="0" stop-color="#4a4a4a"/><stop offset=".5" stop-color="#6a6a6a"/><stop offset="1" stop-color="#8a8a8a"/></linearGradient>
<linearGradient id="rim" x1="0" y1="0" x2="1" y2="0">
<stop offset="0" stop-color="#7a7a7a"/><stop offset=".45" stop-color="#f0f0f0"/><stop offset=".75" stop-color="#9a9a9a"/><stop offset="1" stop-color="#333"/></linearGradient>
<linearGradient id="cap" x1="0" y1="0" x2="0" y2="1"><stop offset="0" stop-color="#1c1c1c"/><stop offset=".5" stop-color="#4a4a4a"/><stop offset="1" stop-color="#222"/></linearGradient>
<linearGradient id="ln" x1="0" y1="0" x2="0" y2="1"><stop offset="0" stop-color="#555"/><stop offset=".35" stop-color="#e0e0e0"/><stop offset=".6" stop-color="#999"/><stop offset="1" stop-color="#2a2a2a"/></linearGradient>
<linearGradient id="bl4" x1="0" y1="0" x2="1" y2="0"><stop offset="0" stop-color="#a0a0a0"/><stop offset=".3" stop-color="#707070"/><stop offset=".6" stop-color="#383838"/><stop offset="1" stop-color="#1a1a1a"/></linearGradient>
<filter id="bl" x="-40%" y="-40%" width="180%" height="180%"><feGaussianBlur stdDeviation="4"/></filter>
<filter id="bl2" x="-30%" y="-30%" width="160%" height="160%"><feGaussianBlur stdDeviation="1.6"/></filter>
<filter id="b3" x="-5%" y="-5%" width="110%" height="110%"><feGaussianBlur stdDeviation=".35"/></filter>
</defs><rect x="732.5" y="47.7" width="282.5" height="227.6" fill="url(#bg3)"/><g filter="url(#bl)" fill="#000"><ellipse cx="757" cy="224" rx="20" ry="14"/><ellipse cx="745" cy="212" rx="9" ry="10"/><ellipse cx="772" cy="230" rx="14" ry="9"/><rect x="787" y="224" width="32" height="19" rx="5" transform="rotate(18 803 233.5)"/><ellipse cx="782" cy="228" rx="10" ry="8"/></g><g filter="url(#bl2)"><ellipse cx="845" cy="249.5" rx="7" ry="4.5" fill="#333" opacity=".85"/><ellipse cx="898" cy="267.5" rx="21" ry="3.6" fill="#000" transform="rotate(11 898 267.5)"/></g><g filter="url(#b3)"><g transform="translate(786 150) rotate(19.7)"><path d="M159.0 -19.0 L206.0 -20.5 L206.0 -18.0 L161.0 -13.0Z" fill="#f020e0"/><path d="M160.0 -14.0 L206.0 -18.2 L206.0 -16.0 L162.0 -10.0Z" fill="#e8a020"/><path d="M161.0 -11.0 L206.0 -16.2 L206.0 -13.0 L163.0 -6.0Z" fill="#f01818"/><path d="M162.0 -7.0 L206.0 -13.2 L206.0 -9.0 L164.0 -1.0Z" fill="#20e020"/><path d="M163.0 -3.0 L204.0 -0.6 L204.0 0.6 L168.0 5.5Z" fill="#1010f0"/><ellipse cx="207.4" cy="0" rx="2.4" ry="21.0" fill="#2a2a2a"/><ellipse cx="206.4" cy="0" rx="2.4" ry="21.0" fill="#3a3a3a"/><ellipse cx="6" cy="0" rx="10" ry="72.5" fill="#1a1a1a"/><linearGradient id="domev" gradientUnits="userSpaceOnUse" x1="0" y1="-72" x2="0" y2="72"><stop offset="0" stop-color="#2e2e2e"/><stop offset=".3" stop-color="#555"/><stop offset=".6" stop-color="#6e6e6e"/><stop offset="1" stop-color="#5e5e5e"/></linearGradient><ellipse cx="-6.6" cy="0" rx="19" ry="72.5" fill="url(#domev)"/><ellipse cx="6.0" cy="0" rx="10.0" ry="72.5" fill="#1a1a1a"/><linearGradient id="cv17" gradientUnits="userSpaceOnUse" x1="0" y1="-72.5" x2="0" y2="72.5"><stop offset="0" stop-color="#161616"/><stop offset=".1" stop-color="#343434"/><stop offset=".3" stop-color="#6e6e6e"/><stop offset=".46" stop-color="#c0c0c0"/><stop offset=".56" stop-color="#f0f0f0"/><stop offset=".68" stop-color="#bcbcbc"/><stop offset=".86" stop-color="#8e8e8e"/><stop offset="1" stop-color="#666"/></linearGradient><path d="M-6.6 -72.5 L6.6 -72.5 A10.0 72.5 0 0 0 6.6 72.5 L-6.6 72.5 A4.5 72.5 0 0 1 -6.6 -72.5 Z" fill="url(#cv17)"/><path d="M-3.2 41.0 L9.0 45.0 L13.8 45.0 A10.0 72.5 0 0 1 6.0 72.5 A10.0 72.5 0 0 1 -3.2 41.0 Z" fill="url(#cv17)"/><rect x="-1.0" y="-3.1" width="2.8" height="3.6" fill="#1010f0"/><rect x="-0.3" y="18.2" width="2.8" height="3.6" fill="#20e020"/><rect x="0.5" y="27.2" width="2.8" height="3.6" fill="#f01818"/><rect x="1.7" y="34.7" width="2.8" height="3.6" fill="#e8c020"/><rect x="3.7" y="40.7" width="2.8" height="3.6" fill="#f020e0"/><ellipse cx="24.0" cy="0" rx="6.0" ry="43.5" fill="#1a1a1a"/><linearGradient id="cv26" gradientUnits="userSpaceOnUse" x1="0" y1="-43.5" x2="0" y2="43.5"><stop offset="0" stop-color="#161616"/><stop offset=".1" stop-color="#343434"/><stop offset=".3" stop-color="#6e6e6e"/><stop offset=".46" stop-color="#c0c0c0"/><stop offset=".56" stop-color="#f0f0f0"/><stop offset=".68" stop-color="#bcbcbc"/><stop offset=".86" stop-color="#8e8e8e"/><stop offset="1" stop-color="#666"/></linearGradient><path d="M8.0 -43.5 L24.6 -43.5 A6.0 43.5 0 0 0 24.6 43.5 L8.0 43.5 A6.0 43.5 0 0 1 8.0 -43.5 Z" fill="url(#cv26)"/><path d="M18.5 28.5 L29.0 31.5 L28.1 31.5 A6.0 43.5 0 0 1 24.0 43.5 A6.0 43.5 0 0 1 18.5 28.5 Z" fill="url(#cv26)"/><rect x="21.5" y="-2.1" width="2.6" height="3.2" fill="#1010f0"/><rect x="21.9" y="11.4" width="2.6" height="3.2" fill="#20e020"/><rect x="22.6" y="18.4" width="2.6" height="3.2" fill="#f01818"/><rect x="23.6" y="23.9" width="2.6" height="3.2" fill="#e8c020"/><rect x="24.9" y="27.9" width="2.6" height="3.2" fill="#f020e0"/><ellipse cx="56.0" cy="0" rx="4.6" ry="30.5" fill="#1a1a1a"/><linearGradient id="cv35" gradientUnits="userSpaceOnUse" x1="0" y1="-30.5" x2="0" y2="30.5"><stop offset="0" stop-color="#161616"/><stop offset=".1" stop-color="#343434"/><stop offset=".3" stop-color="#6e6e6e"/><stop offset=".46" stop-color="#c0c0c0"/><stop offset=".56" stop-color="#f0f0f0"/><stop offset=".68" stop-color="#bcbcbc"/><stop offset=".86" stop-color="#8e8e8e"/><stop offset="1" stop-color="#666"/></linearGradient><path d="M29.0 -30.5 L56.6 -30.5 A4.6 30.5 0 0 0 56.6 30.5 L29.0 30.5 A4.6 30.5 0 0 1 29.0 -30.5 Z" fill="url(#cv35)"/><path d="M53.5 -3.6 L88.0 -4.7 L88.0 3.6 L55.5 5.5Z" fill="#1010f0"/><path d="M54.0 5.4 L88.0 3.5 L88.0 9.9 L54.0 12.4Z" fill="#20e020"/><path d="M54.0 12.3 L88.0 9.8 L88.0 11.8 L54.0 16.0Z" fill="#f01818"/><path d="M54.0 15.9 L88.0 11.7 L88.0 13.6 L54.0 18.4Z" fill="#e8a020"/><path d="M54.0 18.3 L88.0 13.5 L88.0 18.3 L56.0 21.5Z" fill="#f020e0"/><path d="M88.0 -4.7 L119.0 -4.3 L119.0 0.0 L88.0 3.6Z" fill="#1010f0"/><path d="M88.0 3.5 L118.0 -1.0 L118.0 0.6 L88.0 9.9Z" fill="#20e020"/><path d="M88.0 9.8 L118.0 0.5 L118.0 1.3 L88.0 11.8Z" fill="#f01818"/><path d="M88.0 11.7 L118.0 1.2 L118.0 2.1 L88.0 13.6Z" fill="#e8a020"/><path d="M88.0 13.5 L118.0 2.0 L118.0 3.2 L88.0 18.3Z" fill="#f020e0"/><path d="M117.0 -4.6 L132.0 -4.0 L132.0 -1.0 L117.0 -0.4Z" fill="#f020e0"/><path d="M118.0 2.5 L124.0 3.0 L124.0 6.0 L118.0 5.5Z" fill="#1010f0"/><ellipse cx="88.4" cy="0" rx="3.8" ry="20.5" fill="url(#bl4)"/><ellipse cx="129.0" cy="0" rx="2.2" ry="9.3" fill="#2a2a2a"/><ellipse cx="128.0" cy="0" rx="2.2" ry="9.3" fill="url(#ln)"/><ellipse cx="146.5" cy="0" rx="2.4" ry="14.2" fill="#1a1a1a"/><linearGradient id="cv53" gradientUnits="userSpaceOnUse" x1="0" y1="-14.2" x2="0" y2="14.2"><stop offset="0" stop-color="#161616"/><stop offset=".1" stop-color="#343434"/><stop offset=".3" stop-color="#6e6e6e"/><stop offset=".46" stop-color="#c0c0c0"/><stop offset=".56" stop-color="#f0f0f0"/><stop offset=".68" stop-color="#bcbcbc"/><stop offset=".86" stop-color="#8e8e8e"/><stop offset="1" stop-color="#666"/></linearGradient><path d="M133.5 -14.2 L147.1 -14.2 A2.4 14.2 0 0 0 147.1 14.2 L133.5 14.2 A2.4 14.2 0 0 1 133.5 -14.2 Z" fill="url(#cv53)"/><ellipse cx="156" cy="0" rx="5.2" ry="19.2" fill="url(#bl4)"/><ellipse cx="164.2" cy="3.2" rx="1.7" ry="14.6" fill="#2c2c2c"/></g></g><path d="M744.8 260.5 L748.6 253 L753 262.6z" fill="#d8d8d8" stroke="#aaa" stroke-width=".3"/><path d="M744.8 260.5 L747.8 251.4" stroke="#28c028" stroke-width="1.7"/><path d="M744.8 260.5 L754 263.5" stroke="#2038d0" stroke-width="1.5"/><text x="747.2" y="248.6" font-family="Liberation Sans,sans-serif" font-size="5" fill="#58c858">Y</text><text x="755.6" y="264.2" font-family="Liberation Sans,sans-serif" font-size="5.6" font-style="italic" fill="#4a5ac0">Z</text><path d="M817 269.7 H865.7 M817 267.7 v4 M865.7 267.7 v4 M826.7 268.9 v1.6 M836.5 268.9 v1.6 M846.2 268.9 v1.6 M856 268.9 v1.6" stroke="#111" stroke-width=".8" fill="none"/><text x="869" y="272.3" font-family="Liberation Sans,sans-serif" font-size="7.4" fill="#000">20 mm</text></svg>
<div class="a" style="left:731px;top:275.5px;width:286px;height:2.5px;background:#e6e9f0"></div>
<div class="a" style="left:5.5px;top:278.5px;width:445px;height:1.5px;background:#c9ccd3"></div>
<div class="a" style="left:6.5px;top:279.5px;width:288.0px;height:256.5px;background:#fff;border-left:1px solid #d3d8ea"></div>
<div class="a" style="left:6.5px;top:290.0px;width:288.0px;height:.8px;background:#e4e6ec"></div>
<div class="t" style="left:18.2px;top:282.1px;font-size:6.2px;color:#333;letter-spacing:-0.81px;word-spacing:2.08px;">3: FFT PSF</div>
<div class="t" style="left:18.7px;top:293.8px;font-size:6.2px;color:#2c2c2c;letter-spacing:-.2px;">Settings</div>
<div class="t" style="left:182.9px;top:293.8px;font-size:6.0px;color:#2c2c2c;letter-spacing:-.1px;">3 x 4</div>
<div class="t" style="left:217.9px;top:295.6px;font-size:5.4px;color:#2c2c2c;">标准</div>
<div class="t" style="left:237.5px;top:295.6px;font-size:5.4px;color:#2c2c2c;">自动</div>
<div class="m" style="left:8.50px;top:327.60px;font-size:16.20px;color:#262626;transform:scale(0.33333);transform-origin:0 0">1.0</div>
<div class="m" style="left:15.50px;top:371.30px;font-size:16.20px;color:#262626;transform:scale(0.33333);transform-origin:0 0">0.5</div>
<div class="m" style="left:29.00px;top:410.50px;font-size:16.20px;color:#262626;transform:scale(0.33333);transform-origin:0 0">0</div>
<div class="m" style="left:35.50px;top:420.60px;font-size:16.20px;color:#262626;transform:scale(0.33333);transform-origin:0 0">-50.0</div>
<div class="m" style="left:101.50px;top:433.50px;font-size:16.20px;color:#262626;transform:scale(0.33333);transform-origin:0 0">0</div>
<div class="m" style="left:179.50px;top:452.00px;font-size:16.20px;color:#262626;transform:scale(0.33333);transform-origin:0 0">50.0</div>
<div class="m" style="left:220.50px;top:411.20px;font-size:16.20px;color:#262626;transform:scale(0.33333);transform-origin:0 0">0</div>
<div class="m" style="left:77.50px;top:436.65px;font-size:19.05px;transform:rotate(13.3deg) scale(0.33333);transform-origin:0 50%">X-Position (µm)</div>
<div class="m" style="left:231.50px;top:432.40px;font-size:16.80px;transform:rotate(-71deg) scale(0.33333);transform-origin:0 50%">Y-Position (µm)</div>
<div class="m" style="left:248.00px;top:338.10px;font-size:16.35px;color:#262626;transform:scale(0.33333);transform-origin:0 0">Polychromatic</div>
<div class="m" style="left:248.00px;top:345.50px;font-size:16.35px;color:#262626;transform:scale(0.33333);transform-origin:0 0">FFT PSF</div>
<div class="m" style="left:260.00px;top:359.60px;font-size:16.50px;color:#262626;transform:scale(0.33333);transform-origin:0 0">0.709</div>
<div class="m" style="left:260.00px;top:368.50px;font-size:16.50px;color:#262626;transform:scale(0.33333);transform-origin:0 0">0.638</div>
<div class="m" style="left:260.00px;top:377.50px;font-size:16.50px;color:#262626;transform:scale(0.33333);transform-origin:0 0">0.567</div>
<div class="m" style="left:260.00px;top:386.40px;font-size:16.50px;color:#262626;transform:scale(0.33333);transform-origin:0 0">0.496</div>
<div class="m" style="left:260.00px;top:395.30px;font-size:16.50px;color:#262626;transform:scale(0.33333);transform-origin:0 0">0.425</div>
<div class="m" style="left:260.00px;top:404.20px;font-size:16.50px;color:#262626;transform:scale(0.33333);transform-origin:0 0">0.354</div>
<div class="m" style="left:260.00px;top:413.20px;font-size:16.50px;color:#262626;transform:scale(0.33333);transform-origin:0 0">0.283</div>
<div class="m" style="left:260.00px;top:422.10px;font-size:16.50px;color:#262626;transform:scale(0.33333);transform-origin:0 0">0.213</div>
<div class="m" style="left:260.00px;top:431.00px;font-size:16.50px;color:#262626;transform:scale(0.33333);transform-origin:0 0">0.142</div>
<div class="m" style="left:260.00px;top:440.00px;font-size:16.50px;color:#262626;transform:scale(0.33333);transform-origin:0 0">0.071</div>
<div class="m" style="left:260.00px;top:448.90px;font-size:16.50px;color:#262626;transform:scale(0.33333);transform-origin:0 0">0</div>
<div class="m" style="left:8.00px;top:475.60px;width:855.0px;text-align:center;font-size:13.20px;transform:scale(0.33333);transform-origin:0 0">Polychromatic FFT PSF</div>
<div class="m" style="left:13.00px;top:488.60px;font-size:13.20px;color:#262626;transform:scale(0.33333);transform-origin:0 0">2026/2/9</div>
<div class="m" style="left:13.00px;top:494.70px;font-size:13.20px;color:#262626;transform:scale(0.33333);transform-origin:0 0">0.4300 to 0.6560 µm at 0.00 (deg).</div>
<div class="m" style="left:13.00px;top:500.70px;font-size:13.20px;color:#262626;transform:scale(0.33333);transform-origin:0 0">Side is 105.50 µm.</div>
<div class="m" style="left:13.00px;top:506.80px;font-size:13.20px;color:#262626;transform:scale(0.33333);transform-origin:0 0">Surface: Image</div>
<div class="m" style="left:13.00px;top:512.80px;font-size:13.20px;color:#262626;transform:scale(0.33333);transform-origin:0 0">Reference Coordinates: 0.00000E+00, 0.00000E+00</div>
<div class="m" style="left:198.00px;top:482.80px;width:285.0px;text-align:center;font-size:13.20px;transform:scale(0.33333);transform-origin:0 0">Zemax</div>
<div class="m" style="left:198.00px;top:489.00px;width:285.0px;text-align:center;font-size:13.20px;transform:scale(0.33333);transform-origin:0 0">Zemax OpticStudio 19.4</div>
<div class="a" style="left:6.5px;top:528.8px;width:288.0px;height:7.2px;background:#c8cad0"></div>
<div class="a" style="left:16.5px;top:528.8px;width:27px;height:7.2px;background:#d9dadf"></div>
<div class="t" style="left:20.0px;top:531.6px;font-size:6.2px;color:#333;letter-spacing:-.3px;">Graph</div>
<div class="a" style="left:42.1px;top:529.4px;width:28.4px;height:7.2px;background:#cdd0d8;border:.7px solid #9fa2ae"></div>
<div class="t" style="left:50.8px;top:531.6px;font-size:6.2px;color:#333;letter-spacing:-.3px;">Text</div>
<div class="a" style="left:295.5px;top:279.5px;width:295.0px;height:256.5px;background:#fff;border-left:1px solid #d3d8ea"></div>
<div class="a" style="left:295.5px;top:290.0px;width:295.0px;height:.8px;background:#e4e6ec"></div>
<div class="t" style="left:307.2px;top:282.1px;font-size:6.2px;color:#333;letter-spacing:-0.69px;word-spacing:1.76px;">7: FFT MTF</div>
<div class="a" style="left:294.5px;top:279.5px;width:1px;height:257px;background:#d5d8e2"></div>
<div class="t" style="left:307.7px;top:293.8px;font-size:6.2px;color:#2c2c2c;letter-spacing:-.2px;">Settings</div>
<div class="t" style="left:471.9px;top:293.8px;font-size:6.0px;color:#2c2c2c;letter-spacing:-.1px;">3 x 4</div>
<div class="t" style="left:506.9px;top:295.6px;font-size:5.4px;color:#2c2c2c;">标准</div>
<div class="t" style="left:526.5px;top:295.6px;font-size:5.4px;color:#2c2c2c;">自动</div>
<div class="m" style="left:320.40px;top:432.60px;width:90.0px;text-align:center;font-size:15.90px;transform:scale(0.33333);transform-origin:0 0">0</div>
<div class="m" style="left:344.70px;top:432.60px;width:90.0px;text-align:center;font-size:15.90px;transform:scale(0.33333);transform-origin:0 0">42.0</div>
<div class="m" style="left:369.00px;top:432.60px;width:90.0px;text-align:center;font-size:15.90px;transform:scale(0.33333);transform-origin:0 0">84.0</div>
<div class="m" style="left:393.20px;top:432.60px;width:90.0px;text-align:center;font-size:15.90px;transform:scale(0.33333);transform-origin:0 0">126.0</div>
<div class="m" style="left:417.50px;top:432.60px;width:90.0px;text-align:center;font-size:15.90px;transform:scale(0.33333);transform-origin:0 0">168.0</div>
<div class="m" style="left:441.80px;top:432.60px;width:90.0px;text-align:center;font-size:15.90px;transform:scale(0.33333);transform-origin:0 0">210.0</div>
<div class="m" style="left:466.10px;top:432.60px;width:90.0px;text-align:center;font-size:15.90px;transform:scale(0.33333);transform-origin:0 0">252.0</div>
<div class="m" style="left:490.40px;top:432.60px;width:90.0px;text-align:center;font-size:15.90px;transform:scale(0.33333);transform-origin:0 0">294.0</div>
<div class="m" style="left:514.60px;top:432.60px;width:90.0px;text-align:center;font-size:15.90px;transform:scale(0.33333);transform-origin:0 0">336.0</div>
<div class="m" style="left:538.90px;top:432.60px;width:90.0px;text-align:center;font-size:15.90px;transform:scale(0.33333);transform-origin:0 0">378.0</div>
<div class="m" style="left:563.20px;top:432.60px;width:90.0px;text-align:center;font-size:15.90px;transform:scale(0.33333);transform-origin:0 0">420.0</div>
<div class="m" style="left:313.00px;top:426.80px;width:60.0px;text-align:right;font-size:15.90px;transform:scale(0.33333);transform-origin:0 0">0</div>
<div class="m" style="left:313.00px;top:404.30px;width:60.0px;text-align:right;font-size:15.90px;transform:scale(0.33333);transform-origin:0 0">0.2</div>
<div class="m" style="left:313.00px;top:381.90px;width:60.0px;text-align:right;font-size:15.90px;transform:scale(0.33333);transform-origin:0 0">0.4</div>
<div class="m" style="left:313.00px;top:359.40px;width:60.0px;text-align:right;font-size:15.90px;transform:scale(0.33333);transform-origin:0 0">0.6</div>
<div class="m" style="left:313.00px;top:337.00px;width:60.0px;text-align:right;font-size:15.90px;transform:scale(0.33333);transform-origin:0 0">0.8</div>
<div class="m" style="left:313.00px;top:314.50px;width:60.0px;text-align:right;font-size:15.90px;transform:scale(0.33333);transform-origin:0 0">1.0</div>
<div class="m" style="left:357.00px;top:442.20px;width:600.0px;text-align:center;font-size:18.45px;transform:scale(0.33333);transform-origin:0 0">Spatial Frequency in cycles per mm</div>
<div class="m" style="left:160.00px;top:363.70px;width:300.0px;text-align:center;font-size:16.80px;transform:rotate(-90deg) scale(0.33333)">Modulus of the OTF</div>
<div class="m" style="left:305.50px;top:464.10px;font-size:8.70px;color:#444;transform:scale(0.33333);transform-origin:0 0">Diff. limit-Tangential</div>
<div class="m" style="left:353.40px;top:464.10px;font-size:8.70px;color:#444;transform:scale(0.33333);transform-origin:0 0">Diff. limit-Sagittal</div>
<div class="m" style="left:401.30px;top:464.10px;font-size:8.70px;color:#444;transform:scale(0.33333);transform-origin:0 0">0.00 (deg)-Tangential</div>
<div class="m" style="left:449.20px;top:464.10px;font-size:8.70px;color:#444;transform:scale(0.33333);transform-origin:0 0">0.00 (deg)-Sagittal</div>
<div class="m" style="left:497.10px;top:464.10px;font-size:8.70px;color:#444;transform:scale(0.33333);transform-origin:0 0">43.50 (deg)-Tangential</div>
<div class="m" style="left:545.00px;top:464.10px;font-size:8.70px;color:#444;transform:scale(0.33333);transform-origin:0 0">43.50 (deg)-Sagittal</div>
<div class="m" style="left:305.50px;top:469.00px;font-size:8.70px;color:#444;transform:scale(0.33333);transform-origin:0 0">61.00 (deg)-Tangential</div>
<div class="m" style="left:353.40px;top:469.00px;font-size:8.70px;color:#444;transform:scale(0.33333);transform-origin:0 0">61.00 (deg)-Sagittal</div>
<div class="m" style="left:401.30px;top:469.00px;font-size:8.70px;color:#444;transform:scale(0.33333);transform-origin:0 0">74.00 (deg)-Tangential</div>
<div class="m" style="left:449.20px;top:469.00px;font-size:8.70px;color:#444;transform:scale(0.33333);transform-origin:0 0">74.00 (deg)-Sagittal</div>
<div class="m" style="left:497.10px;top:469.00px;font-size:8.70px;color:#444;transform:scale(0.33333);transform-origin:0 0">87.00 (deg)-Tangential</div>
<div class="m" style="left:545.00px;top:469.00px;font-size:8.70px;color:#444;transform:scale(0.33333);transform-origin:0 0">87.00 (deg)-Sagittal</div>
<div class="m" style="left:297.00px;top:479.80px;width:873.0px;text-align:center;font-size:13.80px;color:#222;transform:scale(0.33333);transform-origin:0 0">Polychromatic Diffraction MTF</div>
<div class="m" style="left:302.00px;top:492.90px;font-size:13.20px;color:#262626;transform:scale(0.33333);transform-origin:0 0">2026/2/9</div>
<div class="m" style="left:302.00px;top:498.70px;font-size:13.20px;color:#262626;transform:scale(0.33333);transform-origin:0 0">Data for 0.4300 to 0.6560 µm.</div>
<div class="m" style="left:302.00px;top:504.50px;font-size:13.20px;color:#262626;transform:scale(0.33333);transform-origin:0 0">Surface: Image</div>
<div class="m" style="left:302.00px;top:516.10px;font-size:13.20px;color:#262626;transform:scale(0.33333);transform-origin:0 0">Legend items refer to Field positions</div>
<div class="m" style="left:491.00px;top:486.80px;width:291.0px;text-align:center;font-size:13.20px;transform:scale(0.33333);transform-origin:0 0">Zemax</div>
<div class="m" style="left:491.00px;top:492.30px;width:291.0px;text-align:center;font-size:13.20px;transform:scale(0.33333);transform-origin:0 0">Zemax OpticStudio 19.4</div>
<div class="a" style="left:295.5px;top:527.0px;width:295.0px;height:9.0px;background:#c8cad0"></div>
<div class="a" style="left:305.5px;top:527.0px;width:27px;height:9.0px;background:#d9dadf"></div>
<div class="t" style="left:309.0px;top:529.8px;font-size:6.2px;color:#333;letter-spacing:-.3px;">Graph</div>
<div class="a" style="left:331.1px;top:527.6px;width:28.4px;height:9.0px;background:#cdd0d8;border:.7px solid #9fa2ae"></div>
<div class="t" style="left:339.8px;top:529.8px;font-size:6.2px;color:#333;letter-spacing:-.3px;">Text</div>
<div class="a" style="left:591.0px;top:279.5px;width:313.5px;height:256.5px;background:#fff;border-left:1px solid #d3d8ea"></div>
<div class="a" style="left:591.0px;top:290.0px;width:313.5px;height:.8px;background:#e4e6ec"></div>
<div class="t" style="left:602.7px;top:282.1px;font-size:6.2px;color:#333;letter-spacing:-0.34px;word-spacing:0.86px;">2: Layout 1</div>
<div class="a" style="left:590.5px;top:279.5px;width:1px;height:257px;background:#d5d8e2"></div>
<div class="a" style="left:904.5px;top:278.5px;width:120px;height:258px;background:linear-gradient(#edeef0 0%,#e6e7ea 25%,#e0e2e5 55%,#e3e5e8 80%,#e8e9eb 100%)"></div>
<div class="a" style="left:904px;top:279.5px;width:1px;height:257px;background:#d9dce4"></div>
<div class="t" style="left:603.4px;top:293.8px;font-size:6.2px;color:#2c2c2c;letter-spacing:-.2px;">Settings</div>
<div class="t" style="left:801.3px;top:293.8px;font-size:6.2px;color:#2c2c2c;letter-spacing:-.27px;">Line Thickness</div>
<div class="t" style="left:745.0px;top:481.4px;font-size:6.6px;color:#111;">20 mm</div>
<div class="m" style="left:593.00px;top:491.60px;width:927.0px;text-align:center;font-size:14.10px;transform:scale(0.33333);transform-origin:0 0">Layout</div>
<div class="m" style="left:599.00px;top:505.60px;font-size:13.95px;color:#262626;transform:scale(0.33333);transform-origin:0 0">2026/2/9</div>
<div class="m" style="left:599.00px;top:511.50px;font-size:13.95px;color:#262626;transform:scale(0.33333);transform-origin:0 0">Total Axial Length:   94.02974 mm</div>
<div class="m" style="left:800.00px;top:503.20px;width:306.0px;text-align:center;font-size:18.00px;transform:scale(0.33333);transform-origin:0 0">Zemax</div>
<div class="m" style="left:800.00px;top:510.60px;width:306.0px;text-align:center;font-size:18.00px;text-indent:-24.0px;transform:scale(0.33333);transform-origin:0 0">Zemax OpticStudio 19.4</div>
<svg class="a" style="left:0;top:0;pointer-events:none" width="1024" height="536" viewBox="0 0 1024 536"><defs><linearGradient id="gg" x1="0" x2="1"><stop offset="0" stop-color="#222"/><stop offset="1" stop-color="#eee"/></linearGradient></defs>
<circle cx="454.0" cy="16.5" r=".9" fill="#3a6fd8"/>
<circle cx="457.0" cy="18.5" r=".9" fill="#3fae49"/>
<circle cx="454.5" cy="21.5" r=".9" fill="#e05a3a"/>
<circle cx="458.0" cy="21.8" r=".9" fill="#999"/>
<path d="M695.8 18.7 h4.4 l-2.2 2.6z" fill="#333"/>
<rect x="704.2" y="20.3" width="3.6" height="1.1" fill="#777"/>
<rect x="713.0" y="17.9" width="3.6" height="3.6" fill="none" stroke="#808080" stroke-width=".6"/>
<rect x="713.0" y="17.9" width="3.6" height=".9" fill="#808080"/>
<path d="M721.7 18.0 l3.4 3.4 m0 -3.4 l-3.4 3.4" stroke="#777" stroke-width=".7"/>
<circle cx="456.6" cy="31.3" r="3.5" fill="#fff" stroke="#9a9ca2" stroke-width=".6"/>
<path d="M455.0 30.7 l1.6 1.6 l1.6 -1.6" fill="none" stroke="#555" stroke-width=".8"/>
<rect x="485.2" y="26.8" width=".8" height="9" fill="#dcdee3"/>
<path d="M488.5 30.8 a2.5 2.3 0 0 1 4.4 -1.1" fill="none" stroke="#2f80e4" stroke-width="1.2"/>
<path d="M492.0 30.3 l2.3 0 l-.9 -2.2z" fill="#2f80e4"/>
<path d="M493.5 32.2 a2.5 2.3 0 0 1 -4.4 1.1" fill="none" stroke="#2f80e4" stroke-width="1.2"/>
<path d="M490.0 32.7 l-2.3 0 l.9 2.2z" fill="#2f80e4"/>
<rect x="497.6" y="28.1" width="4.2" height="4.8" fill="#e6eefb" stroke="#86a3d8" stroke-width=".55"/>
<rect x="500.2" y="29.9" width="4.2" height="4.8" fill="#cfdef7" stroke="#7394d0" stroke-width=".55"/>
<rect x="507.8" y="28.0" width="6.4" height="6.6" fill="#e9effa" stroke="#7f96c8" stroke-width=".55"/>
<rect x="508.8" y="30.7" width="1.2" height="3.6" fill="#4a72c8"/>
<rect x="510.5" y="29.3" width="1.2" height="5" fill="#e89a38"/>
<rect x="512.2" y="31.5" width="1.2" height="2.8" fill="#cc5a48"/>
<rect x="519.2" y="27.8" width="4" height="2.4" fill="#f4f4f4" stroke="#8a8a8a" stroke-width=".5"/>
<rect x="517.7" y="30.0" width="7" height="3.4" rx=".8" fill="#a8aab0" stroke="#777" stroke-width=".5"/>
<rect x="519.2" y="32.4" width="4" height="2" fill="#fff" stroke="#8a8a8a" stroke-width=".5"/>
<rect x="527.2" y="26.8" width=".8" height="9" fill="#dcdee3"/>
<path d="M531.6 34.0 L535.6 28.4" stroke="#ea8c2c" stroke-width="1.2" stroke-linecap="round"/>
<path d="M531.1 34.3 l.7 .4" stroke="#6b4a1e" stroke-width=".7"/>
<rect x="540.5" y="28.2" width="6.2" height="6.2" fill="#fff" stroke="#2a2a2a" stroke-width=".9"/>
<path d="M550.1 34.6 L556.6 28.3" stroke="#333" stroke-width=".9"/>
<path d="M557.4 27.5 l-2.6 .5 l2.1 2.1 z" fill="#222"/>
<rect x="559.9" y="30.7" width="7.4" height="1.6" fill="#1c1c1c"/>
<text x="573.6" y="34.8" font-family="Liberation Sans,sans-serif" font-weight="bold" font-size="9.4" text-anchor="middle" fill="#111" stroke="#111" stroke-width=".25">A</text>
<rect x="579.2" y="26.8" width=".8" height="9" fill="#dcdee3"/>
<path d="M584.2 31.2 v-1.5 a1.4 1.4 0 0 1 2.8 0 v1.5" fill="none" stroke="#a8a8a8" stroke-width=".7"/>
<rect x="583.4" y="31.2" width="4.4" height="3.3" rx=".5" fill="#d2b070" stroke="#a08a58" stroke-width=".4"/>
<rect x="592.3" y="26.0" width="10.6" height="10.6" fill="#f9dc91" stroke="#e6bd57" stroke-width=".5"/>
<rect x="593.8" y="27.5" width="7.6" height="7.6" fill="#3c3c3c"/>
<path d="M594.6 28.3 l2.2 0 l-2.2 2.2z M600.6 28.3 l-2.2 0 l2.2 2.2z M594.6 34.3 l2.2 0 l-2.2 -2.2z M600.6 34.3 l-2.2 0 l2.2 -2.2z" fill="#fff"/>
<rect x="596.6" y="30.3" width="2" height="2" fill="#fff"/>
<rect x="604.7" y="28.0" width="5.6" height="4.6" fill="#e2eafa" stroke="#6a88cc" stroke-width=".55"/>
<rect x="604.7" y="28.0" width="5.6" height="1.2" fill="#4a72cc"/>
<rect x="606.7" y="30.7" width="5" height="4" fill="#9ab4ea" stroke="#5a7cc4" stroke-width=".55"/>
<path d="M616.2 29.3 l3.4 -1.6 l3.4 1.6 v4 l-3.4 1.6 l-3.4 -1.6z" fill="#4a4a4a" stroke="#222" stroke-width=".5"/>
<path d="M616.2 29.3 l3.4 1.6 l3.4 -1.6 M619.6 30.9 v4" fill="none" stroke="#ddd" stroke-width=".5"/>
<path d="M640.8 30.7 h2.6 l-1.3 1.6z" fill="#333"/>
<circle cx="650.3" cy="31.3" r="3.7" fill="#111"/>
<path d="M648.6 31.3 a1.7 1.7 0 1 0 1.7 -1.7" fill="none" stroke="#fff" stroke-width=".8"/>
<path d="M649.4 29.6 l1.6 -1 v2z" fill="#fff"/>
<rect x="656.2" y="26.8" width=".8" height="9" fill="#dcdee3"/>
<path d="M674.8 30.7 h2.6 l-1.3 1.6z" fill="#333"/>
<path d="M694.6 30.7 h2.6 l-1.3 1.6z" fill="#333"/>
<rect x="699.2" y="26.8" width=".8" height="9" fill="#dcdee3"/>
<circle cx="705.8" cy="31.3" r="3.7" fill="#2f5fc0" stroke="#1d3f8c" stroke-width=".5"/>
<text x="705.8" y="33.6" font-family="Liberation Sans,sans-serif" font-weight="bold" font-size="6.4" text-anchor="middle" fill="#fff">?</text>
<rect x="706" y="41.8" width="1.8" height="1.8" fill="#333"/>
<rect x="708.6" y="42.1" width="1.2" height="1.2" fill="#3a3ad0"/>
<rect x="706" y="48.6" width="1.8" height="1.8" fill="#333"/>
<rect x="708.6" y="48.9" width="1.2" height="1.2" fill="#30b030"/>
<rect x="706" y="55.4" width="1.8" height="1.8" fill="#333"/>
<rect x="708.6" y="55.7" width="1.2" height="1.2" fill="#d03030"/>
<rect x="706" y="62.2" width="1.8" height="1.8" fill="#333"/>
<rect x="708.6" y="62.5" width="1.2" height="1.2" fill="#c8a820"/>
<rect x="704.2" y="66.3" width="24" height="1" fill="#555"/>
<g stroke="#e9e9e9" stroke-width=".7" fill="none"><path d="M490.3 65.0 v40 M490.3 65.0 h40"/><path d="M494.3 65.0 v40 M490.3 69.0 h40"/><path d="M498.3 65.0 v40 M490.3 73.0 h40"/><path d="M502.3 65.0 v40 M490.3 77.0 h40"/><path d="M506.3 65.0 v40 M490.3 81.0 h40"/><path d="M510.3 65.0 v40 M490.3 85.0 h40"/><path d="M514.3 65.0 v40 M490.3 89.0 h40"/><path d="M518.3 65.0 v40 M490.3 93.0 h40"/><path d="M522.3 65.0 v40 M490.3 97.0 h40"/><path d="M526.3 65.0 v40 M490.3 101.0 h40"/><path d="M530.3 65.0 v40 M490.3 105.0 h40"/></g>
<ellipse cx="509.8" cy="85.3" rx="2" ry="2.1" fill="#e8501c"/>
<circle cx="508.6" cy="85.6" r=".8" fill="#7fae30"/>
<g stroke="#e9e9e9" stroke-width=".7" fill="none"><path d="M605.3 65.0 v40 M605.3 65.0 h40"/><path d="M609.3 65.0 v40 M605.3 69.0 h40"/><path d="M613.3 65.0 v40 M605.3 73.0 h40"/><path d="M617.3 65.0 v40 M605.3 77.0 h40"/><path d="M621.3 65.0 v40 M605.3 81.0 h40"/><path d="M625.3 65.0 v40 M605.3 85.0 h40"/><path d="M629.3 65.0 v40 M605.3 89.0 h40"/><path d="M633.3 65.0 v40 M605.3 93.0 h40"/><path d="M637.3 65.0 v40 M605.3 97.0 h40"/><path d="M641.3 65.0 v40 M605.3 101.0 h40"/><path d="M645.3 65.0 v40 M605.3 105.0 h40"/></g>
<ellipse cx="625.5" cy="84.6" rx="2.4" ry="2.2" fill="#2fd23a"/>
<ellipse cx="625.5" cy="83.0" rx="2.7" ry="3.2" fill="#ea2a1a"/>
<ellipse cx="625.5" cy="82.0" rx="1.2" ry="1" fill="#f08a3a"/>
<ellipse cx="625.5" cy="79.0" rx="1.6" ry="1.4" fill="#f6f0c8" opacity=".7"/>
<g stroke="#e9e9e9" stroke-width=".7" fill="none"><path d="M547.3 100.0 v40 M547.3 100.0 h40"/><path d="M551.3 100.0 v40 M547.3 104.0 h40"/><path d="M555.3 100.0 v40 M547.3 108.0 h40"/><path d="M559.3 100.0 v40 M547.3 112.0 h40"/><path d="M563.3 100.0 v40 M547.3 116.0 h40"/><path d="M567.3 100.0 v40 M547.3 120.0 h40"/><path d="M571.3 100.0 v40 M547.3 124.0 h40"/><path d="M575.3 100.0 v40 M547.3 128.0 h40"/><path d="M579.3 100.0 v40 M547.3 132.0 h40"/><path d="M583.3 100.0 v40 M547.3 136.0 h40"/><path d="M587.3 100.0 v40 M547.3 140.0 h40"/></g>
<ellipse cx="568.0" cy="119.2" rx="2.2" ry="2" fill="#2fd23a"/>
<ellipse cx="568.0" cy="116.0" rx="3.2" ry="4.4" fill="#ea2018"/>
<ellipse cx="568.0" cy="115.4" rx="1.2" ry="2" fill="none" stroke="#f4c08a" stroke-width=".7"/>
<ellipse cx="568.0" cy="110.0" rx="1.6" ry="1.4" fill="#f6f0c8" opacity=".6"/>
<g stroke="#e9e9e9" stroke-width=".7" fill="none"><path d="M490.3 134.5 v40 M490.3 134.5 h40"/><path d="M494.3 134.5 v40 M490.3 138.5 h40"/><path d="M498.3 134.5 v40 M490.3 142.5 h40"/><path d="M502.3 134.5 v40 M490.3 146.5 h40"/><path d="M506.3 134.5 v40 M490.3 150.5 h40"/><path d="M510.3 134.5 v40 M490.3 154.5 h40"/><path d="M514.3 134.5 v40 M490.3 158.5 h40"/><path d="M518.3 134.5 v40 M490.3 162.5 h40"/><path d="M522.3 134.5 v40 M490.3 166.5 h40"/><path d="M526.3 134.5 v40 M490.3 170.5 h40"/><path d="M530.3 134.5 v40 M490.3 174.5 h40"/></g>
<ellipse cx="510.0" cy="155.0" rx="2.4" ry="1.8" fill="#2fd23a"/>
<path d="M506.2 147.4 q3.8 -3.5 7.6 0 q.6 5 -3.8 8.4 q-4.4 -3.4 -3.8 -8.4z" fill="#ea2a1a"/>
<ellipse cx="510.0" cy="148.4" rx="2" ry="1.4" fill="#f0703a"/>
<ellipse cx="510.0" cy="144.0" rx="2.6" ry="2.4" fill="#faf4dc" opacity=".8"/>
<g stroke="#e9e9e9" stroke-width=".7" fill="none"><path d="M605.3 134.5 v40 M605.3 134.5 h40"/><path d="M609.3 134.5 v40 M605.3 138.5 h40"/><path d="M613.3 134.5 v40 M605.3 142.5 h40"/><path d="M617.3 134.5 v40 M605.3 146.5 h40"/><path d="M621.3 134.5 v40 M605.3 150.5 h40"/><path d="M625.3 134.5 v40 M605.3 154.5 h40"/><path d="M629.3 134.5 v40 M605.3 158.5 h40"/><path d="M633.3 134.5 v40 M605.3 162.5 h40"/><path d="M637.3 134.5 v40 M605.3 166.5 h40"/><path d="M641.3 134.5 v40 M605.3 170.5 h40"/><path d="M645.3 134.5 v40 M605.3 174.5 h40"/></g>
<ellipse cx="625.5" cy="153.4" rx="2.1" ry="3.6" fill="#2fd23a"/>
<ellipse cx="625.5" cy="153.8" rx="1.7" ry="1.7" fill="#e8301c"/>
<ellipse cx="625.5" cy="151.0" rx="1.2" ry="1.3" fill="#3a50b0"/>
<path d="M490.3 65 v40.5 h2" fill="none" stroke="#444" stroke-width=".8"/>
<rect x="452.5" y="204.2" width="276.5" height=".9" fill="#555"/>
<rect x="452.5" y="211" width="276.5" height=".8" fill="#c4c4c4"/>
<rect x="452.5" y="245" width="276.5" height=".6" fill="#d8d8d8"/>
<rect x="636" y="231.4" width="93" height=".6" fill="#c4c4c4"/>
<path d="M450.5 269.3 h4 q2 0 3 3 l1.5 4 q1 2.5 3 2.5 h20 v0.0 h-31.5z" fill="#cfd1d6" stroke="#8e9098" stroke-width=".6"/>
<rect x="733.2" y="15.6" width="7" height="7.4" fill="#e8f0f0" stroke="#555" stroke-width=".6"/>
<rect x="734.6" y="16.6" width="1.6" height="5.4" fill="#2a9a8a"/><rect x="737.4" y="16.6" width="1.6" height="5.4" fill="#2a9a8a"/>
<path d="M982.0 18.7 h4.4 l-2.2 2.6z" fill="#333"/>
<rect x="990.4" y="20.3" width="3.6" height="1.1" fill="#777"/>
<rect x="999.2" y="17.9" width="3.6" height="3.6" fill="none" stroke="#808080" stroke-width=".6"/>
<rect x="999.2" y="17.9" width="3.6" height=".9" fill="#808080"/>
<path d="M1007.9 18.0 l3.4 3.4 m0 -3.4 l-3.4 3.4" stroke="#777" stroke-width=".7"/>
<circle cx="737.2" cy="31.3" r="3.5" fill="#fff" stroke="#9a9ca2" stroke-width=".6"/>
<path d="M735.6 30.7 l1.6 1.6 l1.6 -1.6" fill="none" stroke="#555" stroke-width=".8"/>
<rect x="765.6" y="26.8" width=".8" height="9" fill="#dcdee3"/>
<path d="M768.8 30.8 a2.5 2.3 0 0 1 4.4 -1.1" fill="none" stroke="#2f80e4" stroke-width="1.2"/>
<path d="M772.3 30.3 l2.3 0 l-.9 -2.2z" fill="#2f80e4"/>
<path d="M773.8 32.2 a2.5 2.3 0 0 1 -4.4 1.1" fill="none" stroke="#2f80e4" stroke-width="1.2"/>
<path d="M770.3 32.7 l-2.3 0 l.9 2.2z" fill="#2f80e4"/>
<rect x="778.1" y="28.1" width="4.2" height="4.8" fill="#e6eefb" stroke="#86a3d8" stroke-width=".55"/>
<rect x="780.7" y="29.9" width="4.2" height="4.8" fill="#cfdef7" stroke="#7394d0" stroke-width=".55"/>
<rect x="788.4" y="28.0" width="6.4" height="6.6" fill="#e9effa" stroke="#7f96c8" stroke-width=".55"/>
<rect x="789.4" y="30.7" width="1.2" height="3.6" fill="#4a72c8"/>
<rect x="791.1" y="29.3" width="1.2" height="5" fill="#e89a38"/>
<rect x="792.8" y="31.5" width="1.2" height="2.8" fill="#cc5a48"/>
<rect x="799.8" y="27.8" width="4" height="2.4" fill="#f4f4f4" stroke="#8a8a8a" stroke-width=".5"/>
<rect x="798.3" y="30.0" width="7" height="3.4" rx=".8" fill="#a8aab0" stroke="#777" stroke-width=".5"/>
<rect x="799.8" y="32.4" width="4" height="2" fill="#fff" stroke="#8a8a8a" stroke-width=".5"/>
<rect x="807.1" y="26.8" width=".8" height="9" fill="#dcdee3"/>
<path d="M812.3 34.0 L816.3 28.4" stroke="#ea8c2c" stroke-width="1.2" stroke-linecap="round"/>
<path d="M811.8 34.3 l.7 .4" stroke="#6b4a1e" stroke-width=".7"/>
<rect x="820.9" y="28.2" width="6.2" height="6.2" fill="#fff" stroke="#2a2a2a" stroke-width=".9"/>
<path d="M830.5 34.6 L837.0 28.3" stroke="#333" stroke-width=".9"/>
<path d="M837.8 27.5 l-2.6 .5 l2.1 2.1 z" fill="#222"/>
<rect x="840.3" y="30.7" width="7.4" height="1.6" fill="#1c1c1c"/>
<text x="853.8" y="34.8" font-family="Liberation Sans,sans-serif" font-weight="bold" font-size="9.4" text-anchor="middle" fill="#111" stroke="#111" stroke-width=".25">A</text>
<path d="M860.7 28.9 v5.6 M866.9 28.9 v5.6 M860.7 31.7 h6.2" stroke="#1a1a1a" stroke-width="1.4" fill="none"/>
<rect x="869.6" y="26.8" width=".8" height="9" fill="#dcdee3"/>
<path d="M876.6 27.9 l3.4 6 h-6.8z" fill="#c8642c" stroke="#7a4a2a" stroke-width=".4"/>
<path d="M876.6 30.7 l1.8 3.2 h-3.6z" fill="#6a8fd0"/>
<path d="M881.7 30.7 h2.6 l-1.3 1.6z" fill="#333"/>
<rect x="885.7" y="26.0" width="20.6" height="10.6" fill="#f9dc91" stroke="#e6bd57" stroke-width=".5"/>
<path d="M891.0 31.7 v-4 M891.0 31.7 l-3.4 2.6 M891.0 31.7 l3.4 2.6" stroke="#222" stroke-width="1.1" fill="none"/>
<rect x="897.6" y="28.9" width="7.6" height="5.6" rx=".8" fill="#9a9a9a" stroke="#5a5a5a" stroke-width=".5"/>
<circle cx="901.4" cy="31.7" r="1.7" fill="#ddd" stroke="#555" stroke-width=".5"/>
<path d="M911.2 26.9 l1.5 1.7 h-.9 v1.4 h1.4 v-.9 l1.7 1.5 l-1.7 1.5 v-.9 h-1.4 v1.4 h.9 l-1.5 1.7 l-1.5 -1.7 h.9 v-1.4 h-1.4 v.9 l-1.7 -1.5 l1.7 -1.5 v.9 h1.4 v-1.4 h-.9z" fill="#dfe9fb" stroke="#4a78d0" stroke-width=".6"/>
<circle cx="920.2" cy="30.5" r="2.2" fill="#eef4ff" stroke="#444" stroke-width=".8"/>
<path d="M921.8 32.1 l2.4 2.4" stroke="#444" stroke-width="1.2"/>
<rect x="927.0" y="28.1" width="7.6" height="6.4" rx="1" fill="#8f9197" stroke="#5f6167" stroke-width=".5"/>
<path d="M929.2 31.3 a1.6 1.6 0 1 1 1.6 1.6" fill="none" stroke="#eee" stroke-width=".7"/>
<rect x="937.1" y="26.8" width=".8" height="9" fill="#dcdee3"/>
<circle cx="973.0" cy="31.3" r="3.5" fill="#fff" stroke="#d9534a" stroke-width=".8"/>
<path d="M970.5 28.8 l5 5 M975.5 28.8 l-5 5" stroke="#e08a84" stroke-width=".6"/>
<circle cx="983.3" cy="31.3" r="3.5" fill="#fff" stroke="#d9534a" stroke-width=".8"/>
<path d="M980.8 28.8 l5 5 M985.8 28.8 l-5 5" stroke="#e08a84" stroke-width=".6"/>
<rect x="989.1" y="26.8" width=".8" height="9" fill="#dcdee3"/>
<rect x="990.6" y="26.0" width="20.0" height="10.6" fill="#f9dc91" stroke="#e6bd57" stroke-width=".5"/>
<circle cx="995.4" cy="31.3" r="3.4" fill="#3f6fd0" stroke="#24407c" stroke-width=".6"/>
<path d="M995.4 27.9 a2 3.4 0 0 1 0 6.8" fill="none" stroke="#dfe8ff" stroke-width=".5"/>
<rect x="1002.4" y="27.9" width="6.4" height="6.8" fill="#4b5a9a" stroke="#2a2f55" stroke-width=".6"/>
<rect x="1002.4" y="27.9" width="6.4" height="1.4" fill="#8a93c0"/>
<path d="M761.9 41.8 h2.6 l-1.3 1.6z" fill="#333"/>
<rect x="768.5" y="38.9" width="7" height="7" fill="url(#gg)" stroke="#555" stroke-width=".4"/>
<path d="M777.0 41.8 h2.6 l-1.3 1.6z" fill="#333"/>
<rect x="780.7" y="37.1" width="10.6" height="10.6" fill="#f9dc91" stroke="#e6bd57" stroke-width=".5"/>
<path d="M784.0 45.0 L788.2 39.6" stroke="#333" stroke-width="1.6" stroke-linecap="round"/>
<path d="M786.8 41.4 l1.6 -2" stroke="#e0a030" stroke-width="1.4"/>
<path d="M796.6 42.3 v-1.5 a1.4 1.4 0 0 1 2.8 0 v1.5" fill="none" stroke="#a8a8a8" stroke-width=".7"/>
<rect x="795.8" y="42.3" width="4.4" height="3.3" rx=".5" fill="#d2b070" stroke="#a08a58" stroke-width=".4"/>
<rect x="805.1" y="37.1" width="10.6" height="10.6" fill="#f9dc91" stroke="#e6bd57" stroke-width=".5"/>
<rect x="806.6" y="38.6" width="7.6" height="7.6" fill="#3c3c3c"/>
<path d="M807.4 39.4 l2.2 0 l-2.2 2.2z M813.4 39.4 l-2.2 0 l2.2 2.2z M807.4 45.4 l2.2 0 l-2.2 -2.2z M813.4 45.4 l-2.2 0 l2.2 -2.2z" fill="#fff"/>
<rect x="809.4" y="41.4" width="2" height="2" fill="#fff"/>
<rect x="817.6" y="39.1" width="5.6" height="4.6" fill="#e2eafa" stroke="#6a88cc" stroke-width=".55"/>
<rect x="817.6" y="39.1" width="5.6" height="1.2" fill="#4a72cc"/>
<rect x="819.6" y="41.8" width="5" height="4" fill="#9ab4ea" stroke="#5a7cc4" stroke-width=".55"/>
<circle cx="831.2" cy="42.4" r="3.7" fill="#111"/>
<path d="M829.5 42.4 a1.7 1.7 0 1 0 1.7 -1.7" fill="none" stroke="#fff" stroke-width=".8"/>
<path d="M830.3 40.7 l1.6 -1 v2z" fill="#fff"/>
<rect x="836.6" y="37.9" width=".8" height="9" fill="#dcdee3"/>
<path d="M880.1 41.8 h2.6 l-1.3 1.6z" fill="#333"/>
<circle cx="889.0" cy="42.4" r="3.7" fill="#2f5fc0" stroke="#1d3f8c" stroke-width=".5"/>
<text x="889.0" y="44.7" font-family="Liberation Sans,sans-serif" font-weight="bold" font-size="6.4" text-anchor="middle" fill="#fff">?</text>
<rect x="8.6" y="281.6" width="6.6" height="6.6" fill="#2a2ad8" stroke="#1a1a8a" stroke-width=".5"/>
<path d="M259.9 284.0 h4.4 l-2.2 2.6z" fill="#333"/>
<rect x="268.3" y="285.6" width="3.6" height="1.1" fill="#777"/>
<rect x="277.1" y="283.2" width="3.6" height="3.6" fill="none" stroke="#808080" stroke-width=".6"/>
<rect x="277.1" y="283.2" width="3.6" height=".9" fill="#808080"/>
<path d="M285.8 283.3 l3.4 3.4 m0 -3.4 l-3.4 3.4" stroke="#777" stroke-width=".7"/>
<circle cx="12.5" cy="296.5" r="3.5" fill="#fff" stroke="#9a9ca2" stroke-width=".6"/>
<path d="M10.9 295.9 l1.6 1.6 l1.6 -1.6" fill="none" stroke="#555" stroke-width=".8"/>
<rect x="41.1" y="292.0" width=".8" height="9" fill="#dcdee3"/>
<path d="M44.4 296.0 a2.5 2.3 0 0 1 4.4 -1.1" fill="none" stroke="#2f80e4" stroke-width="1.2"/>
<path d="M47.9 295.5 l2.3 0 l-.9 -2.2z" fill="#2f80e4"/>
<path d="M49.4 297.4 a2.5 2.3 0 0 1 -4.4 1.1" fill="none" stroke="#2f80e4" stroke-width="1.2"/>
<path d="M45.9 297.9 l-2.3 0 l.9 2.2z" fill="#2f80e4"/>
<rect x="53.5" y="293.3" width="4.2" height="4.8" fill="#e6eefb" stroke="#86a3d8" stroke-width=".55"/>
<rect x="56.1" y="295.1" width="4.2" height="4.8" fill="#cfdef7" stroke="#7394d0" stroke-width=".55"/>
<rect x="63.7" y="293.2" width="6.4" height="6.6" fill="#e9effa" stroke="#7f96c8" stroke-width=".55"/>
<rect x="64.7" y="295.9" width="1.2" height="3.6" fill="#4a72c8"/>
<rect x="66.4" y="294.5" width="1.2" height="5" fill="#e89a38"/>
<rect x="68.1" y="296.7" width="1.2" height="2.8" fill="#cc5a48"/>
<rect x="75.1" y="293.0" width="4" height="2.4" fill="#f4f4f4" stroke="#8a8a8a" stroke-width=".5"/>
<rect x="73.6" y="295.2" width="7" height="3.4" rx=".8" fill="#a8aab0" stroke="#777" stroke-width=".5"/>
<rect x="75.1" y="297.6" width="4" height="2" fill="#fff" stroke="#8a8a8a" stroke-width=".5"/>
<rect x="83.1" y="292.0" width=".8" height="9" fill="#dcdee3"/>
<path d="M87.5 299.2 L91.5 293.6" stroke="#ea8c2c" stroke-width="1.2" stroke-linecap="round"/>
<path d="M87.0 299.5 l.7 .4" stroke="#6b4a1e" stroke-width=".7"/>
<rect x="96.4" y="293.4" width="6.2" height="6.2" fill="#fff" stroke="#2a2a2a" stroke-width=".9"/>
<path d="M106.0 299.8 L112.5 293.5" stroke="#333" stroke-width=".9"/>
<path d="M113.3 292.7 l-2.6 .5 l2.1 2.1 z" fill="#222"/>
<rect x="115.8" y="295.9" width="7.4" height="1.6" fill="#1c1c1c"/>
<text x="129.5" y="300.0" font-family="Liberation Sans,sans-serif" font-weight="bold" font-size="9.4" text-anchor="middle" fill="#111" stroke="#111" stroke-width=".25">A</text>
<rect x="135.1" y="292.0" width=".8" height="9" fill="#dcdee3"/>
<path d="M140.1 296.4 v-1.5 a1.4 1.4 0 0 1 2.8 0 v1.5" fill="none" stroke="#a8a8a8" stroke-width=".7"/>
<rect x="139.3" y="296.4" width="4.4" height="3.3" rx=".5" fill="#d2b070" stroke="#a08a58" stroke-width=".4"/>
<rect x="148.2" y="291.2" width="10.6" height="10.6" fill="#f9dc91" stroke="#e6bd57" stroke-width=".5"/>
<rect x="149.7" y="292.7" width="7.6" height="7.6" fill="#3c3c3c"/>
<path d="M150.5 293.5 l2.2 0 l-2.2 2.2z M156.5 293.5 l-2.2 0 l2.2 2.2z M150.5 299.5 l2.2 0 l-2.2 -2.2z M156.5 299.5 l-2.2 0 l2.2 -2.2z" fill="#fff"/>
<rect x="152.5" y="295.5" width="2" height="2" fill="#fff"/>
<rect x="160.6" y="293.2" width="5.6" height="4.6" fill="#e2eafa" stroke="#6a88cc" stroke-width=".55"/>
<rect x="160.6" y="293.2" width="5.6" height="1.2" fill="#4a72cc"/>
<rect x="162.6" y="295.9" width="5" height="4" fill="#9ab4ea" stroke="#5a7cc4" stroke-width=".55"/>
<path d="M172.1 294.5 l3.4 -1.6 l3.4 1.6 v4 l-3.4 1.6 l-3.4 -1.6z" fill="#4a4a4a" stroke="#222" stroke-width=".5"/>
<path d="M172.1 294.5 l3.4 1.6 l3.4 -1.6 M175.5 296.1 v4" fill="none" stroke="#ddd" stroke-width=".5"/>
<path d="M196.7 295.9 h2.6 l-1.3 1.6z" fill="#333"/>
<circle cx="206.2" cy="296.5" r="3.7" fill="#111"/>
<path d="M204.5 296.5 a1.7 1.7 0 1 0 1.7 -1.7" fill="none" stroke="#fff" stroke-width=".8"/>
<path d="M205.3 294.8 l1.6 -1 v2z" fill="#fff"/>
<rect x="212.1" y="292.0" width=".8" height="9" fill="#dcdee3"/>
<path d="M230.7 295.9 h2.6 l-1.3 1.6z" fill="#333"/>
<path d="M250.5 295.9 h2.6 l-1.3 1.6z" fill="#333"/>
<rect x="255.1" y="292.0" width=".8" height="9" fill="#dcdee3"/>
<circle cx="261.7" cy="296.5" r="3.7" fill="#2f5fc0" stroke="#1d3f8c" stroke-width=".5"/>
<text x="261.7" y="298.8" font-family="Liberation Sans,sans-serif" font-weight="bold" font-size="6.4" text-anchor="middle" fill="#fff">?</text>
<path d="M22.2 330.5 L36.4 414.8" stroke="#555" stroke-width=".8" fill="none"/>
<path d="M21.5 330.5 L24.6 348" stroke="#ddd" stroke-width="1.6" fill="none"/>
<path d="M36.4 414.8 L193 447.5" stroke="#ccc" stroke-width="1.4" fill="none"/>
<path d="M193 447.5 L228 393" stroke="#ddd" stroke-width="1.4" fill="none"/>
<defs><linearGradient id="pl" x1="0" y1="0" x2="0" y2="1"><stop offset="0" stop-color="#2b1a82"/><stop offset="1" stop-color="#241478"/></linearGradient><linearGradient id="pk" x1="0" y1="0" x2="0" y2="1"><stop offset="0" stop-color="#c03020"/><stop offset=".12" stop-color="#e06030"/><stop offset=".3" stop-color="#d8c020"/><stop offset=".5" stop-color="#80d020"/><stop offset=".68" stop-color="#30c050"/><stop offset=".82" stop-color="#20a0a0"/><stop offset=".93" stop-color="#3060c0"/><stop offset="1" stop-color="#2a2a9a"/></linearGradient></defs>
<path d="M37.5 414.5 L121 380.8 L228.5 393.2 L192.5 446.8 Z" fill="url(#pl)"/>
<path d="M143.3 351.5 L146 385 Q147.6 398 148.4 402 Q143.3 405.5 138.2 402 Q139 398 140.6 385 Z" fill="url(#pk)"/>
<rect x="247" y="362.0" width="11.4" height="2.3" fill="#e83018"/>
<rect x="247" y="364.0" width="11.4" height="13.8" fill="#f01a0a"/>
<rect x="247" y="377.5" width="11.4" height="2.8" fill="#e07a18"/>
<rect x="247" y="380.0" width="11.4" height="6.3" fill="#d8a810"/>
<rect x="247" y="386.0" width="11.4" height="12.3" fill="#d8d408"/>
<rect x="247" y="398.0" width="11.4" height="12.3" fill="#a8e810"/>
<rect x="247" y="410.0" width="11.4" height="11.3" fill="#58d820"/>
<rect x="247" y="421.0" width="11.4" height="5.8" fill="#30c040"/>
<rect x="247" y="426.5" width="11.4" height="16.8" fill="#18a8a0"/>
<rect x="247" y="443.0" width="11.4" height="4.8" fill="#2a50c8"/>
<rect x="247" y="447.5" width="11.4" height="5.3" fill="#1c20d0"/>
<rect x="8" y="474" width="285.5" height=".7" fill="#bbb"/>
<rect x="8" y="481.5" width="285.5" height=".7" fill="#999"/>
<rect x="198" y="481.5" width=".8" height="35.5" fill="#666"/>
<rect x="198" y="503" width="95.5" height=".7" fill="#999"/>
<path d="M6.5 529.1 h4 q2 0 3 3 l1.5 4 q1 2.5 3 2.5 h20 v0.0 h-31.5z" fill="#cfd1d6" stroke="#8e9098" stroke-width=".6"/>
<path d="M297.6 281.5 v7 h7" fill="none" stroke="#555" stroke-width=".6"/><path d="M298 282.5 q1.5 5 6 6" fill="none" stroke="#4060c0" stroke-width=".7"/><path d="M300.5 282 v3.4 M300.5 282 h2" stroke="#333" stroke-width=".8" fill="none"/>
<path d="M555.9 284.0 h4.4 l-2.2 2.6z" fill="#333"/>
<rect x="564.3" y="285.6" width="3.6" height="1.1" fill="#777"/>
<rect x="573.1" y="283.2" width="3.6" height="3.6" fill="none" stroke="#808080" stroke-width=".6"/>
<rect x="573.1" y="283.2" width="3.6" height=".9" fill="#808080"/>
<path d="M581.8 283.3 l3.4 3.4 m0 -3.4 l-3.4 3.4" stroke="#777" stroke-width=".7"/>
<circle cx="301.5" cy="296.5" r="3.5" fill="#fff" stroke="#9a9ca2" stroke-width=".6"/>
<path d="M299.9 295.9 l1.6 1.6 l1.6 -1.6" fill="none" stroke="#555" stroke-width=".8"/>
<rect x="330.1" y="292.0" width=".8" height="9" fill="#dcdee3"/>
<path d="M333.4 296.0 a2.5 2.3 0 0 1 4.4 -1.1" fill="none" stroke="#2f80e4" stroke-width="1.2"/>
<path d="M336.9 295.5 l2.3 0 l-.9 -2.2z" fill="#2f80e4"/>
<path d="M338.4 297.4 a2.5 2.3 0 0 1 -4.4 1.1" fill="none" stroke="#2f80e4" stroke-width="1.2"/>
<path d="M334.9 297.9 l-2.3 0 l.9 2.2z" fill="#2f80e4"/>
<rect x="342.5" y="293.3" width="4.2" height="4.8" fill="#e6eefb" stroke="#86a3d8" stroke-width=".55"/>
<rect x="345.1" y="295.1" width="4.2" height="4.8" fill="#cfdef7" stroke="#7394d0" stroke-width=".55"/>
<rect x="352.7" y="293.2" width="6.4" height="6.6" fill="#e9effa" stroke="#7f96c8" stroke-width=".55"/>
<rect x="353.7" y="295.9" width="1.2" height="3.6" fill="#4a72c8"/>
<rect x="355.4" y="294.5" width="1.2" height="5" fill="#e89a38"/>
<rect x="357.1" y="296.7" width="1.2" height="2.8" fill="#cc5a48"/>
<rect x="364.1" y="293.0" width="4" height="2.4" fill="#f4f4f4" stroke="#8a8a8a" stroke-width=".5"/>
<rect x="362.6" y="295.2" width="7" height="3.4" rx=".8" fill="#a8aab0" stroke="#777" stroke-width=".5"/>
<rect x="364.1" y="297.6" width="4" height="2" fill="#fff" stroke="#8a8a8a" stroke-width=".5"/>
<rect x="372.1" y="292.0" width=".8" height="9" fill="#dcdee3"/>
<path d="M376.5 299.2 L380.5 293.6" stroke="#ea8c2c" stroke-width="1.2" stroke-linecap="round"/>
<path d="M376.0 299.5 l.7 .4" stroke="#6b4a1e" stroke-width=".7"/>
<rect x="385.4" y="293.4" width="6.2" height="6.2" fill="#fff" stroke="#2a2a2a" stroke-width=".9"/>
<path d="M395.0 299.8 L401.5 293.5" stroke="#333" stroke-width=".9"/>
<path d="M402.3 292.7 l-2.6 .5 l2.1 2.1 z" fill="#222"/>
<rect x="404.8" y="295.9" width="7.4" height="1.6" fill="#1c1c1c"/>
<text x="418.5" y="300.0" font-family="Liberation Sans,sans-serif" font-weight="bold" font-size="9.4" text-anchor="middle" fill="#111" stroke="#111" stroke-width=".25">A</text>
<rect x="424.1" y="292.0" width=".8" height="9" fill="#dcdee3"/>
<path d="M429.1 296.4 v-1.5 a1.4 1.4 0 0 1 2.8 0 v1.5" fill="none" stroke="#a8a8a8" stroke-width=".7"/>
<rect x="428.3" y="296.4" width="4.4" height="3.3" rx=".5" fill="#d2b070" stroke="#a08a58" stroke-width=".4"/>
<rect x="437.2" y="291.2" width="10.6" height="10.6" fill="#f9dc91" stroke="#e6bd57" stroke-width=".5"/>
<rect x="438.7" y="292.7" width="7.6" height="7.6" fill="#3c3c3c"/>
<path d="M439.5 293.5 l2.2 0 l-2.2 2.2z M445.5 293.5 l-2.2 0 l2.2 2.2z M439.5 299.5 l2.2 0 l-2.2 -2.2z M445.5 299.5 l-2.2 0 l2.2 -2.2z" fill="#fff"/>
<rect x="441.5" y="295.5" width="2" height="2" fill="#fff"/>
<rect x="449.6" y="293.2" width="5.6" height="4.6" fill="#e2eafa" stroke="#6a88cc" stroke-width=".55"/>
<rect x="449.6" y="293.2" width="5.6" height="1.2" fill="#4a72cc"/>
<rect x="451.6" y="295.9" width="5" height="4" fill="#9ab4ea" stroke="#5a7cc4" stroke-width=".55"/>
<path d="M461.1 294.5 l3.4 -1.6 l3.4 1.6 v4 l-3.4 1.6 l-3.4 -1.6z" fill="#4a4a4a" stroke="#222" stroke-width=".5"/>
<path d="M461.1 294.5 l3.4 1.6 l3.4 -1.6 M464.5 296.1 v4" fill="none" stroke="#ddd" stroke-width=".5"/>
<path d="M485.7 295.9 h2.6 l-1.3 1.6z" fill="#333"/>
<circle cx="495.2" cy="296.5" r="3.7" fill="#111"/>
<path d="M493.5 296.5 a1.7 1.7 0 1 0 1.7 -1.7" fill="none" stroke="#fff" stroke-width=".8"/>
<path d="M494.3 294.8 l1.6 -1 v2z" fill="#fff"/>
<rect x="501.1" y="292.0" width=".8" height="9" fill="#dcdee3"/>
<path d="M519.7 295.9 h2.6 l-1.3 1.6z" fill="#333"/>
<path d="M539.5 295.9 h2.6 l-1.3 1.6z" fill="#333"/>
<rect x="544.1" y="292.0" width=".8" height="9" fill="#dcdee3"/>
<circle cx="550.7" cy="296.5" r="3.7" fill="#2f5fc0" stroke="#1d3f8c" stroke-width=".5"/>
<text x="550.7" y="298.8" font-family="Liberation Sans,sans-serif" font-weight="bold" font-size="6.4" text-anchor="middle" fill="#fff">?</text>
<g stroke="#e8e8e8" stroke-width=".7" fill="none"><path d="M359.68 316.7 V429.0"/><path d="M383.96 316.7 V429.0"/><path d="M408.24 316.7 V429.0"/><path d="M432.52 316.7 V429.0"/><path d="M456.80 316.7 V429.0"/><path d="M481.08 316.7 V429.0"/><path d="M505.36 316.7 V429.0"/><path d="M529.64 316.7 V429.0"/><path d="M553.92 316.7 V429.0"/><path d="M578.20 316.7 V429.0"/><path d="M335.4 417.77 H578.2"/><path d="M335.4 406.54 H578.2"/><path d="M335.4 395.31 H578.2"/><path d="M335.4 384.08 H578.2"/><path d="M335.4 372.85 H578.2"/><path d="M335.4 361.62 H578.2"/><path d="M335.4 350.39 H578.2"/><path d="M335.4 339.16 H578.2"/><path d="M335.4 327.93 H578.2"/><path d="M335.4 316.70 H578.2"/></g>
<path d="M335.4 316.7 C337.9 321.5 345.4 337.3 350.4 345.3 C355.4 353.4 360.4 359.2 365.5 365.0 C370.5 370.8 375.7 375.1 380.8 380.1 C385.9 385.2 391.1 390.5 396.1 395.3 C401.1 400.1 406.1 404.9 411.1 408.8 C416.1 412.7 422.2 416.4 426.2 418.9 C430.1 421.4 431.7 422.5 434.8 423.9 C438.0 425.4 442.1 426.5 445.2 427.3 C448.4 428.2 431.7 428.7 453.9 429.0 C476.1 429.0 557.5 429.0 578.2 429.0" fill="none" stroke="#e8c060" stroke-width="0.8" stroke-linejoin="round"/>
<path d="M335.4 316.7 C336.7 319.3 340.4 326.1 342.9 332.4 C345.4 338.8 348.1 347.6 350.4 354.9 C352.7 362.2 354.8 369.2 356.8 376.2 C358.8 383.2 360.5 391.2 362.6 397.0 C364.6 402.8 366.9 407.6 368.9 411.0 C371.0 414.5 372.6 416.6 374.7 417.8 C376.8 418.9 379.3 418.2 381.6 417.8 C384.0 417.3 386.5 415.7 388.6 415.0 C390.7 414.3 392.1 413.5 394.4 413.5 C396.6 413.5 398.1 414.0 401.9 415.0 C405.6 416.0 412.6 418.3 416.9 419.6 C421.2 420.9 423.8 421.8 427.9 422.8 C431.9 423.9 437.3 425.1 441.2 426.0 C445.0 426.8 447.9 427.4 451.0 427.9 C454.1 428.4 438.5 428.8 459.7 429.0 C480.9 429.0 558.4 429.0 578.2 429.0" fill="none" stroke="#d070d0" stroke-width="0.7" stroke-dasharray="2 1" stroke-linejoin="round"/>
<path d="M335.4 316.7 C337.9 320.6 345.4 333.4 350.4 340.3 C355.4 347.2 360.4 352.6 365.5 358.3 C370.5 363.9 375.7 368.9 380.8 374.0 C385.9 379.0 391.1 384.0 396.1 388.6 C401.1 393.2 406.1 397.6 411.1 401.5 C416.1 405.4 421.2 408.9 426.2 412.2 C431.2 415.4 436.6 418.9 441.2 421.1 C445.8 423.4 449.4 424.4 453.9 425.6 C458.4 426.8 447.6 427.9 468.4 428.4 C489.1 429.0 559.9 428.9 578.2 429.0" fill="none" stroke="#b06050" stroke-width="0.8" stroke-linejoin="round"/>
<path d="M335.4 316.7 C337.9 319.5 345.4 327.9 350.4 333.5 C355.4 339.2 360.4 344.4 365.5 350.4 C370.5 356.4 375.7 363.7 380.8 369.5 C385.9 375.3 391.1 380.9 396.1 385.2 C401.1 389.5 406.1 392.1 411.1 395.3 C416.1 398.5 421.2 401.4 426.2 404.3 C431.2 407.2 436.1 410.2 441.2 412.7 C446.2 415.3 452.0 417.7 456.5 419.6 C461.0 421.4 464.8 422.7 468.4 423.9 C471.9 425.1 473.8 426.1 477.6 426.8 C481.5 427.4 486.3 427.5 491.5 427.7 C496.7 427.8 502.1 427.7 508.8 427.9 C515.6 428.1 520.4 428.8 532.0 429.0 C543.5 429.0 570.5 429.0 578.2 429.0" fill="none" stroke="#50c850" stroke-width="0.8" stroke-linejoin="round"/>
<path d="M335.4 316.7 C337.9 319.9 345.4 329.4 350.4 335.8 C355.4 342.2 360.4 348.5 365.5 354.9 C370.5 361.2 375.7 368.5 380.8 374.0 C385.9 379.4 391.1 383.7 396.1 387.4 C401.1 391.2 406.1 393.8 411.1 396.4 C416.1 399.1 421.2 401.2 426.2 403.2 C431.2 405.1 436.1 406.5 441.2 408.2 C446.2 409.9 451.4 411.6 456.5 413.3 C461.6 415.0 466.8 416.8 471.8 418.3 C476.9 419.9 481.7 421.3 486.9 422.6 C492.1 423.9 497.5 425.2 503.0 426.2 C508.6 427.2 514.6 428.0 520.4 428.4 C526.2 428.9 528.1 428.9 537.7 429.0 C547.4 429.0 571.5 429.0 578.2 429.0" fill="none" stroke="#5060d0" stroke-width="0.8" stroke-linejoin="round"/>
<path d="M335.4 316.7 C337.9 319.1 345.4 326.1 350.4 331.3 C355.4 336.5 360.4 342.5 365.5 348.1 C370.5 353.8 375.7 359.9 380.8 365.0 C385.9 370.0 391.1 374.7 396.1 378.5 C401.1 382.2 406.1 384.6 411.1 387.4 C416.1 390.3 421.2 392.8 426.2 395.3 C431.2 397.8 436.1 400.2 441.2 402.6 C446.2 405.0 451.4 407.6 456.5 409.9 C461.6 412.2 466.8 414.6 471.8 416.6 C476.9 418.7 481.7 420.8 486.9 422.3 C492.1 423.8 497.5 424.7 503.0 425.6 C508.6 426.6 514.6 427.3 520.4 427.9 C526.2 428.4 528.1 428.8 537.7 429.0 C547.4 429.0 571.5 429.0 578.2 429.0" fill="none" stroke="#f0a0b0" stroke-width="0.7" stroke-dasharray="3 1" stroke-linejoin="round"/>
<path d="M335.4 316.7 C337.9 319.3 345.4 327.0 350.4 332.4 C355.4 337.8 360.4 343.6 365.5 349.3 C370.5 355.0 375.7 361.4 380.8 366.7 C385.9 371.9 391.1 376.7 396.1 380.7 C401.1 384.7 406.1 387.8 411.1 390.8 C416.1 393.8 421.2 396.2 426.2 398.7 C431.2 401.2 436.1 403.7 441.2 406.0 C446.2 408.2 451.4 410.2 456.5 412.2 C461.6 414.1 466.8 416.0 471.8 417.8 C476.9 419.5 481.7 421.5 486.9 422.8 C492.1 424.2 497.5 425.1 503.0 425.9 C508.6 426.7 514.6 427.1 520.4 427.7 C526.2 428.2 528.1 428.8 537.7 429.0 C547.4 429.0 571.5 429.0 578.2 429.0" fill="none" stroke="#e0c0a0" stroke-width="0.7" stroke-linejoin="round"/>
<path d="M335.4 316.7 C337.9 319.7 345.4 328.7 350.4 334.7 C355.4 340.7 360.4 346.5 365.5 352.6 C370.5 358.8 375.7 366.5 380.8 371.7 C385.9 377.0 391.1 380.5 396.1 384.1 C401.1 387.6 406.1 390.3 411.1 393.1 C416.1 395.9 421.2 398.5 426.2 400.9 C431.2 403.4 436.1 405.4 441.2 407.7 C446.2 409.9 451.4 412.3 456.5 414.4 C461.6 416.5 466.8 418.3 471.8 420.0 C476.9 421.7 481.7 423.4 486.9 424.5 C492.1 425.6 497.5 426.2 503.0 426.8 C508.6 427.3 514.6 427.5 520.4 427.9 C526.2 428.3 528.1 428.8 537.7 429.0 C547.4 429.0 571.5 429.0 578.2 429.0" fill="none" stroke="#a0d8a0" stroke-width="0.6" stroke-dasharray="3 1" stroke-linejoin="round"/>
<path d="M451.0 425.6 C453.9 425.8 462.6 426.3 468.4 426.5 C474.1 426.8 479.9 426.8 485.7 427.0 C491.5 427.2 497.3 427.4 503.0 427.7 C508.8 427.9 514.6 428.1 520.4 428.3 C526.2 428.5 528.1 428.7 537.7 428.8 C547.4 428.9 571.5 429.0 578.2 429.0" fill="none" stroke="#e07030" stroke-width="0.7" stroke-linejoin="round"/>
<path d="M335.4 316.7 C339.4 319.7 351.6 328.5 359.7 334.7 C367.8 340.8 375.9 347.4 384.0 353.8 C392.1 360.1 400.1 367.0 408.2 372.9 C416.3 378.7 424.4 383.5 432.5 388.6 C440.6 393.6 448.7 398.5 456.8 403.2 C464.9 407.9 473.0 413.1 481.1 416.6 C489.2 420.2 497.3 422.5 505.4 424.5 C513.5 426.5 524.2 427.7 529.6 428.4 C535.0 429.0 529.6 428.9 537.7 429.0 C545.8 429.0 571.5 429.0 578.2 429.0" fill="none" stroke="#4a4a4a" stroke-width="0.9" stroke-linejoin="round"/>
<path d="M335.4 316.7 V429.0 H578.2" fill="none" stroke="#777" stroke-width="1"/>
<rect x="299.5" y="464.5" width="2.4" height="2.4" fill="#3c6a3c"/>
<rect x="302.1" y="465.4" width="3" height=".7" fill="#444"/>
<rect x="347.4" y="464.5" width="2.4" height="2.4" fill="#3c6a3c"/>
<rect x="350.0" y="465.4" width="3" height=".7" fill="#444"/>
<rect x="395.3" y="464.5" width="2.4" height="2.4" fill="#3c6a3c"/>
<rect x="397.9" y="465.4" width="3" height=".7" fill="#5060d0"/>
<rect x="443.2" y="464.5" width="2.4" height="2.4" fill="#3c6a3c"/>
<rect x="445.8" y="465.4" width="3" height=".7" fill="#5060d0"/>
<rect x="491.1" y="464.5" width="2.4" height="2.4" fill="#3c6a3c"/>
<rect x="493.7" y="465.4" width="3" height=".7" fill="#50c850"/>
<rect x="539.0" y="464.5" width="2.4" height="2.4" fill="#3c6a3c"/>
<rect x="541.6" y="465.4" width="3" height=".7" fill="#50c850"/>
<rect x="299.5" y="469.4" width="2.4" height="2.4" fill="#3c6a3c"/>
<rect x="302.1" y="470.3" width="3" height=".7" fill="#c04040"/>
<rect x="347.4" y="469.4" width="2.4" height="2.4" fill="#3c6a3c"/>
<rect x="350.0" y="470.3" width="3" height=".7" fill="#c04040"/>
<rect x="395.3" y="469.4" width="2.4" height="2.4" fill="#3c6a3c"/>
<rect x="397.9" y="470.3" width="3" height=".7" fill="#e0b040"/>
<rect x="443.2" y="469.4" width="2.4" height="2.4" fill="#3c6a3c"/>
<rect x="445.8" y="470.3" width="3" height=".7" fill="#e0b040"/>
<rect x="491.1" y="469.4" width="2.4" height="2.4" fill="#3c6a3c"/>
<rect x="493.7" y="470.3" width="3" height=".7" fill="#d070d0"/>
<rect x="539.0" y="469.4" width="2.4" height="2.4" fill="#3c6a3c"/>
<rect x="541.6" y="470.3" width="3" height=".7" fill="#d070d0"/>
<rect x="587.5" y="462" width=".7" height="12" fill="#aaa"/>
<rect x="297.5" y="478.6" width="291" height=".7" fill="#999"/>
<rect x="297.5" y="485.5" width="291" height=".7" fill="#888"/>
<rect x="491" y="485.5" width=".8" height="37.5" fill="#777"/>
<rect x="491" y="507.3" width="97.5" height=".7" fill="#999"/>
<rect x="297.5" y="523" width="291" height=".6" fill="#ddd"/>
<path d="M295.5 527.3 h4 q2 0 3 3 l1.5 4 q1 2.5 3 2.5 h20 v0.0 h-31.5z" fill="#cfd1d6" stroke="#8e9098" stroke-width=".6"/>
<path d="M593.6 281.6 h2.6 v6.6 h-2.6z" fill="#fff" stroke="#444" stroke-width=".6"/><path d="M597.2 283 l2.6 1.9 l-2.6 1.9z" fill="#fff" stroke="#444" stroke-width=".5"/>
<path d="M869.9 284.0 h4.4 l-2.2 2.6z" fill="#333"/>
<rect x="878.3" y="285.6" width="3.6" height="1.1" fill="#777"/>
<rect x="887.1" y="283.2" width="3.6" height="3.6" fill="none" stroke="#808080" stroke-width=".6"/>
<rect x="887.1" y="283.2" width="3.6" height=".9" fill="#808080"/>
<path d="M895.8 283.3 l3.4 3.4 m0 -3.4 l-3.4 3.4" stroke="#777" stroke-width=".7"/>
<circle cx="597.0" cy="296.5" r="3.5" fill="#fff" stroke="#9a9ca2" stroke-width=".6"/>
<path d="M595.4 295.9 l1.6 1.6 l1.6 -1.6" fill="none" stroke="#555" stroke-width=".8"/>
<rect x="625.6" y="292.0" width=".8" height="9" fill="#dcdee3"/>
<path d="M629.5 296.0 a2.5 2.3 0 0 1 4.4 -1.1" fill="none" stroke="#2f80e4" stroke-width="1.2"/>
<path d="M633.0 295.5 l2.3 0 l-.9 -2.2z" fill="#2f80e4"/>
<path d="M634.5 297.4 a2.5 2.3 0 0 1 -4.4 1.1" fill="none" stroke="#2f80e4" stroke-width="1.2"/>
<path d="M631.0 297.9 l-2.3 0 l.9 2.2z" fill="#2f80e4"/>
<rect x="638.6" y="293.3" width="4.2" height="4.8" fill="#e6eefb" stroke="#86a3d8" stroke-width=".55"/>
<rect x="641.2" y="295.1" width="4.2" height="4.8" fill="#cfdef7" stroke="#7394d0" stroke-width=".55"/>
<rect x="648.8" y="293.2" width="6.4" height="6.6" fill="#e9effa" stroke="#7f96c8" stroke-width=".55"/>
<rect x="649.8" y="295.9" width="1.2" height="3.6" fill="#4a72c8"/>
<rect x="651.5" y="294.5" width="1.2" height="5" fill="#e89a38"/>
<rect x="653.2" y="296.7" width="1.2" height="2.8" fill="#cc5a48"/>
<rect x="660.0" y="293.0" width="4" height="2.4" fill="#f4f4f4" stroke="#8a8a8a" stroke-width=".5"/>
<rect x="658.5" y="295.2" width="7" height="3.4" rx=".8" fill="#a8aab0" stroke="#777" stroke-width=".5"/>
<rect x="660.0" y="297.6" width="4" height="2" fill="#fff" stroke="#8a8a8a" stroke-width=".5"/>
<rect x="667.9" y="292.0" width=".8" height="9" fill="#dcdee3"/>
<path d="M672.5 299.2 L676.5 293.6" stroke="#ea8c2c" stroke-width="1.2" stroke-linecap="round"/>
<path d="M672.0 299.5 l.7 .4" stroke="#6b4a1e" stroke-width=".7"/>
<rect x="681.2" y="293.4" width="6.2" height="6.2" fill="#fff" stroke="#2a2a2a" stroke-width=".9"/>
<path d="M690.8 299.8 L697.3 293.5" stroke="#333" stroke-width=".9"/>
<path d="M698.1 292.7 l-2.6 .5 l2.1 2.1 z" fill="#222"/>
<rect x="700.6" y="295.9" width="7.4" height="1.6" fill="#1c1c1c"/>
<text x="714.2" y="300.0" font-family="Liberation Sans,sans-serif" font-weight="bold" font-size="9.4" text-anchor="middle" fill="#111" stroke="#111" stroke-width=".25">A</text>
<path d="M721.1 294.1 v5.6 M727.3 294.1 v5.6 M721.1 296.9 h6.2" stroke="#1a1a1a" stroke-width="1.4" fill="none"/>
<rect x="730.1" y="292.0" width=".8" height="9" fill="#dcdee3"/>
<path d="M736.0 292.1 l1.5 1.7 h-.9 v1.4 h1.4 v-.9 l1.7 1.5 l-1.7 1.5 v-.9 h-1.4 v1.4 h.9 l-1.5 1.7 l-1.5 -1.7 h.9 v-1.4 h-1.4 v.9 l-1.7 -1.5 l1.7 -1.5 v.9 h1.4 v-1.4 h-.9z" fill="#dfe9fb" stroke="#4a78d0" stroke-width=".6"/>
<rect x="741.0" y="291.2" width="10.6" height="10.6" fill="#f9dc91" stroke="#e6bd57" stroke-width=".5"/>
<circle cx="745.5" cy="295.7" r="2.2" fill="#eef4ff" stroke="#444" stroke-width=".8"/>
<path d="M747.1 297.3 l2.4 2.4" stroke="#444" stroke-width="1.2"/>
<path d="M756.1 296.4 v-1.5 a1.4 1.4 0 0 1 2.8 0 v1.5" fill="none" stroke="#a8a8a8" stroke-width=".7"/>
<rect x="755.3" y="296.4" width="4.4" height="3.3" rx=".5" fill="#d2b070" stroke="#a08a58" stroke-width=".4"/>
<rect x="764.3" y="291.2" width="10.6" height="10.6" fill="#f9dc91" stroke="#e6bd57" stroke-width=".5"/>
<rect x="765.8" y="292.7" width="7.6" height="7.6" fill="#3c3c3c"/>
<path d="M766.6 293.5 l2.2 0 l-2.2 2.2z M772.6 293.5 l-2.2 0 l2.2 2.2z M766.6 299.5 l2.2 0 l-2.2 -2.2z M772.6 299.5 l-2.2 0 l2.2 -2.2z" fill="#fff"/>
<rect x="768.6" y="295.5" width="2" height="2" fill="#fff"/>
<rect x="776.6" y="293.2" width="5.6" height="4.6" fill="#e2eafa" stroke="#6a88cc" stroke-width=".55"/>
<rect x="776.6" y="293.2" width="5.6" height="1.2" fill="#4a72cc"/>
<rect x="778.6" y="295.9" width="5" height="4" fill="#9ab4ea" stroke="#5a7cc4" stroke-width=".55"/>
<circle cx="790.5" cy="296.5" r="3.7" fill="#111"/>
<path d="M788.8 296.5 a1.7 1.7 0 1 0 1.7 -1.7" fill="none" stroke="#fff" stroke-width=".8"/>
<path d="M789.6 294.8 l1.6 -1 v2z" fill="#fff"/>
<rect x="796.2" y="292.0" width=".8" height="9" fill="#dcdee3"/>
<path d="M842.2 295.9 h2.6 l-1.3 1.6z" fill="#333"/>
<circle cx="852.0" cy="296.5" r="3.7" fill="#2f5fc0" stroke="#1d3f8c" stroke-width=".5"/>
<text x="852.0" y="298.8" font-family="Liberation Sans,sans-serif" font-weight="bold" font-size="6.4" text-anchor="middle" fill="#fff">?</text>
<rect x="593.5" y="302.8" width="309" height="232.5" fill="none" stroke="#555" stroke-width=".9"/>
<g style="mix-blend-mode:normal"><path d="M642.0 447.8 L650.4 438.3 L670.6 426.9 L700.8 417.5 L734.4 415.8 L757.9 409.1 L778.0 398.7 L786.4 395.4 L786.4 397.4 L778.0 400.7 L757.9 411.1 L734.4 418.5 L700.8 421.9 L670.6 433.0 L650.4 445.4 L644.1 449.8Z" fill="#f828e8"/><path d="M638.4 443.4 L650.4 431.6 L670.6 420.9 L700.8 414.8 L734.4 413.5 L757.9 407.5 L778.0 398.4 L786.4 395.4 L786.4 397.0 L778.0 400.1 L757.9 409.5 L734.4 415.8 L700.8 417.5 L670.6 426.9 L650.4 438.3 L642.0 447.8Z" fill="#d8a018"/><path d="M632.6 435.7 L650.4 423.6 L670.6 415.8 L700.8 410.1 L734.4 409.1 L757.9 404.8 L778.0 397.4 L786.4 395.0 L786.4 397.0 L778.0 400.1 L757.9 408.1 L734.4 413.5 L700.8 414.8 L670.6 421.2 L650.4 429.6 L637.0 441.4Z" fill="#f81810"/><path d="M626.3 426.9 L650.4 415.8 L670.6 409.1 L700.8 403.4 L734.4 400.7 L757.9 398.1 L778.0 394.0 L786.4 392.7 L786.4 396.7 L778.0 399.1 L757.9 404.8 L734.4 409.1 L700.8 410.1 L670.6 415.8 L650.4 421.6 L630.0 432.0Z" fill="#18f018"/><path d="M778.0 391.3 L791.5 385.6 L804.9 379.9 L818.3 375.9 L831.8 374.2 L877.1 371.9 L877.1 373.9 L831.8 376.9 L818.3 378.6 L804.9 382.6 L791.5 388.0 L778.0 394.7Z" fill="#f828e8"/><path d="M778.0 392.7 L791.5 387.3 L804.9 382.3 L818.3 378.2 L831.8 376.6 L877.1 373.5 L877.1 376.6 L831.8 379.2 L818.3 380.6 L804.9 384.6 L791.5 389.7 L778.0 396.0Z" fill="#d8a018"/><path d="M778.0 393.4 L791.5 388.7 L804.9 383.9 L818.3 380.3 L831.8 378.9 L877.1 376.2 L877.1 380.6 L831.8 382.9 L818.3 383.9 L804.9 387.0 L791.5 391.3 L778.0 397.4Z" fill="#f81810"/><path d="M778.0 394.0 L791.5 390.7 L804.9 386.6 L818.3 383.6 L831.8 382.6 L877.1 380.3 L877.1 384.6 L831.8 388.7 L818.3 389.3 L804.9 391.3 L791.5 394.0 L778.0 398.7Z" fill="#18f018"/><path d="M617.5 394.4 L690.7 394.4 L704.2 391.3 L734.4 389.7 L778.0 390.0 L804.9 389.3 L831.8 388.7 L877.1 395.4 L877.1 396.7 L831.8 402.4 L804.9 402.1 L778.0 401.7 L734.4 402.1 L704.2 400.7 L690.7 398.1 L617.5 398.1Z" fill="#1414e6"/><path d="M704.2 393.0 L734.4 391.3 L778.0 391.7 L804.9 391.0 L831.8 390.7 L845.2 393.0 L845.2 398.7 L831.8 400.7 L804.9 400.4 L778.0 400.1 L734.4 400.4 L704.2 399.1Z" fill="#8078e0" opacity="0.80"/><path d="M724.3 404.8 L737.8 402.8 L764.6 399.4 L773.0 397.4 L773.0 399.4 L764.6 404.1 L737.8 410.8 L724.3 410.8Z" fill="#6a9a28" opacity="0.50"/><path d="M788.1 390.0 L804.9 384.6 L825.1 380.6 L825.1 386.6 L804.9 389.3 L788.1 394.0Z" fill="#7a8a28" opacity="0.45"/></g><path d="M643.7 312.7 V341 A70.5 70.5 0 0 0 643.7 450 V479" fill="none" stroke="#222" stroke-width="1"/><path d="M646.9 343.3 H665.5 V358.2 A50 50 0 0 0 665.5 433.8 V448.6 H646.9 A400 400 0 0 1 646.9 343.3Z" fill="none" stroke="#222" stroke-width="1"/><path d="M668 358.7 H703.4 V370.9 A36 36 0 0 0 703.4 421 V433.2 H668Z" fill="none" stroke="#222" stroke-width="1"/><path d="M674 358.7 A56 56 0 0 1 674 433.2" fill="none" stroke="#222" stroke-width="1"/><path d="M737.6 372.2 H741.4 Q744.2 384 744.2 396 Q744.2 408 741.4 419.5 H737.6 Q733.3 408 733.3 396 Q733.3 384 737.6 372.2Z" fill="none" stroke="#222" stroke-width="1"/><rect x="783.8" y="385.7" width="6.6" height="19.8" rx="1.6" fill="none" stroke="#222" stroke-width="1"/><path d="M792.6 379.3 H805 Q811 387 811 396 Q811 405 805 412.4 H792.6Z" fill="none" stroke="#222" stroke-width="1"/><path d="M800.5 379.3 Q804.5 388 804.5 396 Q804.5 404 800.5 412.4" fill="none" stroke="#222" stroke-width="1"/><path d="M818.5 373.6 H822 Q827.4 385 827.4 396 Q827.4 407 822 418 H818.5 Q813.6 407 813.6 396 Q813.6 385 818.5 373.6Z" fill="none" stroke="#222" stroke-width="1"/><path d="M829.2 375.4 V416.8" fill="none" stroke="#555" stroke-width=".9"/><rect x="876" y="371.7" width="2.2" height="48.6" fill="#444"/>
<path d="M686.3 483.8 H742.2 M686.3 481.8 v4 M742.2 481.8 v4 M697.5 483 v1.6 M708.7 483 v1.6 M719.8 483 v1.6 M731 483 v1.6" stroke="#222" stroke-width=".8" fill="none"/>
<rect x="593.5" y="488.7" width="309" height=".8" fill="#444"/>
<rect x="593.5" y="497.5" width="309" height=".8" fill="#444"/>
<rect x="799.4" y="497.5" width=".8" height="38" fill="#444"/>
<rect x="799.4" y="520.3" width="103" height=".8" fill="#555"/>
</svg>
</div>
</body></html>
